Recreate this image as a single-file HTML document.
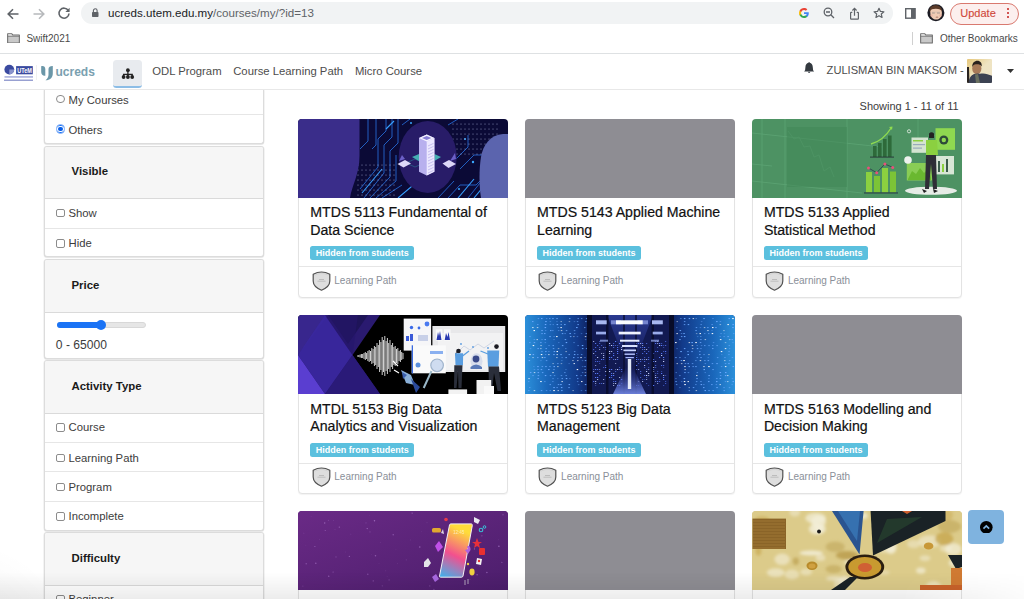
<!DOCTYPE html><html><head><meta charset="utf-8"><style>
*{box-sizing:border-box;margin:0;padding:0}
html,body{width:1024px;height:599px;overflow:hidden;background:#fff;font-family:"Liberation Sans",sans-serif;position:relative}
.a{position:absolute}
.t{position:absolute;white-space:nowrap;line-height:1}
#pill{left:81px;top:2.2px;width:812px;height:22.2px;border-radius:11.1px;background:#f1f3f4}
#bmline{left:0;top:53px;width:1024px;height:1px;background:#dee1e3}
#nav{left:0;top:54px;width:1024px;height:35.5px;background:#fff;border-bottom:1px solid #e8e8e8}
.scard{position:absolute;left:44px;width:219.5px;border:1px solid #dcdcdc;border-radius:3px;background:#fff;box-shadow:0 1px 1px rgba(0,0,0,.1),-.5px 0 0 #ececec,.5px 0 0 #ececec;overflow:hidden}
.shdr{position:absolute;left:0;right:0;top:0;background:#f6f6f6;border-bottom:1px solid #dadada}
.shdr b{position:absolute;left:26.5px;font-size:11.4px;color:#1a1a1a;font-weight:bold;white-space:nowrap;line-height:1}
.row{position:absolute;left:0;right:0;border-top:1px solid #e6e6e6}
.row span{position:absolute;left:23.5px;font-size:11.3px;color:#3c3c3c;white-space:nowrap;line-height:1}
.cb{position:absolute;left:11px;width:8.7px;height:8.7px;border:1px solid #8c8c8c;border-radius:2px;background:#fff}
.card{position:absolute;width:209.8px;height:179px;border:1px solid #e3e3e3;border-radius:4px;background:#fff;box-shadow:0 1px 1px rgba(0,0,0,.05)}
.img{position:absolute;left:-1px;top:-1px;width:209.8px;height:79.6px;overflow:hidden;border-radius:4px 4px 0 0}
.img svg{display:block}
.ttl{position:absolute;left:11px;top:84.2px;font-size:14.15px;line-height:17.6px;color:#111;white-space:nowrap;-webkit-text-stroke:.2px #111}
.badge{position:absolute;left:11px;top:126.6px;width:104px;height:14px;border-radius:2.5px;background:#5bc0de;color:#fff;font-weight:bold;font-size:9px;line-height:14px;padding-left:5.5px;white-space:nowrap}
.ftr{position:absolute;left:0;right:0;top:146.4px;bottom:0;border-top:1px solid #e6e6e6}
.ftr span{position:absolute;left:35px;top:8.3px;font-size:10px;color:#8a8f98;white-space:nowrap;line-height:1}
.shield{position:absolute;left:12.3px;top:2.7px;width:19px;height:21px}
</style></head><body>
<div class="a" id="pill"></div>
<svg class="a" style="left:6.3px;top:6.5px" width="14" height="14" viewBox="0 0 14 14"><path d="M12.5 7H2.2M7 2.2L2.2 7L7 11.8" fill="none" stroke="#5f6368" stroke-width="1.6"/></svg>
<svg class="a" style="left:31.5px;top:6.5px" width="14" height="14" viewBox="0 0 14 14"><path d="M1.5 7H11.8M7 2.2L11.8 7L7 11.8" fill="none" stroke="#b7b9bc" stroke-width="1.6"/></svg>
<svg class="a" style="left:57px;top:6px" width="14" height="14" viewBox="0 0 14 14"><path d="M11.3 4.6A5 5 0 1 0 12 7.5" fill="none" stroke="#5f6368" stroke-width="1.6"/><path d="M12.6 1.8V6H8.4Z" fill="#5f6368"/></svg>
<svg class="a" style="left:91px;top:7px" width="9" height="11" viewBox="91 7 9 11"><path d="M93.4 12.3V10.6A1.85 1.85 0 0 1 97.1 10.6V12.3" fill="none" stroke="#5f6368" stroke-width="1.1"/><rect x="92" y="12" width="6.5" height="5" rx=".7" fill="#5f6368"/></svg>
<div class="t" style="left:108px;top:6.9px;font-size:11.6px;color:#202124">ucreds.utem.edu.my<span style="color:#5f6368">/courses/my/?id=13</span></div>
<svg class="a" style="left:798.6px;top:8.4px" width="10" height="10" viewBox="0 0 24 24"><path d="M23.5 12.3c0-.8-.1-1.6-.2-2.3H12v4.5h6.5c-.3 1.5-1.1 2.7-2.4 3.6v3h3.9c2.2-2.1 3.5-5.1 3.5-8.8z" fill="#4285f4"/><path d="M12 24c3.2 0 6-1.1 7.9-2.9l-3.9-3c-1.1.7-2.4 1.2-4 1.2-3.1 0-5.7-2.1-6.6-4.9H1.4v3.1C3.4 21.4 7.4 24 12 24z" fill="#34a853"/><path d="M5.4 14.4c-.2-.7-.4-1.5-.4-2.4s.1-1.6.4-2.4V6.5H1.4C.5 8.2 0 10 0 12s.5 3.8 1.4 5.5l4-3.1z" fill="#fbbc05"/><path d="M12 4.8c1.8 0 3.3.6 4.6 1.8l3.4-3.4C18 1.2 15.2 0 12 0 7.4 0 3.4 2.6 1.4 6.5l4 3.1C6.3 6.9 8.9 4.8 12 4.8z" fill="#ea4335"/></svg>
<svg class="a" style="left:822.5px;top:7px" width="12" height="12" viewBox="0 0 12 12"><circle cx="5" cy="5" r="3.8" fill="none" stroke="#5f6368" stroke-width="1.3"/><path d="M3 5H7M7.8 7.8L11 11" stroke="#5f6368" stroke-width="1.3"/></svg>
<svg class="a" style="left:848.5px;top:6.5px" width="11" height="13" viewBox="0 0 11 13"><path d="M3.3 5.3H2.2Q1.6 5.3 1.6 5.9V11.6Q1.6 12.2 2.2 12.2H8.8Q9.4 12.2 9.4 11.6V5.9Q9.4 5.3 8.8 5.3H7.7" fill="none" stroke="#5f6368" stroke-width="1.2"/><path d="M5.5 8.8V1.6M3.4 3.5L5.5 1.4L7.6 3.5" fill="none" stroke="#5f6368" stroke-width="1.2"/></svg>
<svg class="a" style="left:872.5px;top:6.5px" width="12" height="12" viewBox="0 0 24 24"><path d="M12 2.5l2.9 6.3 6.9.7-5.2 4.6 1.5 6.8L12 17.4l-6.1 3.5 1.5-6.8-5.2-4.6 6.9-.7z" fill="none" stroke="#5f6368" stroke-width="2.4" stroke-linejoin="round"/></svg>
<svg class="a" style="left:905px;top:7.9px" width="10.8" height="10.9" viewBox="0 0 10.8 10.9"><rect x="0.7" y="0.7" width="9.4" height="9.5" fill="none" stroke="#5f6368" stroke-width="1.4"/><rect x="6" y="0.7" width="4.1" height="9.5" fill="#5f6368"/></svg>
<svg class="a" style="left:926px;top:3px" width="20" height="20" viewBox="926 3 20 20"><circle cx="935.9" cy="12.85" r="8.5" fill="#1c1c24"/><path d="M929.5 11C929.3 7.5 932 5.3 935.5 5.3 939 5.3 941.8 7.3 941.8 10.5L941 12 930.5 12.5Z" fill="#5a3a28"/><path d="M930.3 11.5C930.5 9.5 932.5 8.8 935.8 8.8 939.2 8.8 941.6 9.8 941.9 12 942.2 16 940 19.6 936.2 19.6 932.4 19.6 930 16.5 930.3 11.5Z" fill="#f0cbb4"/><circle cx="931.5" cy="15.5" r="1.3" fill="#eab0a0" opacity=".7"/><circle cx="940.5" cy="15.5" r="1.3" fill="#eab0a0" opacity=".7"/><path d="M932 13H934.8M937 13H940" stroke="#8a8078" stroke-width=".7"/><path d="M932 12.2H940.3" stroke="#b8b0a8" stroke-width=".4"/><ellipse cx="937" cy="17.2" rx="1.4" ry=".6" fill="#b08070"/></svg>
<div class="a" style="left:949.5px;top:2.5px;width:69.5px;height:22px;border-radius:11px;border:1px solid #d9796f;background:#fcefee"></div>
<div class="t" style="left:960.3px;top:8.3px;font-size:11px;color:#d0493c;-webkit-text-stroke:.15px #d0493c">Update</div>
<div class="a" style="left:1006.8px;top:7.8px;width:2.2px;height:2.2px;border-radius:50%;background:#c5221f;box-shadow:0 4px 0 #c5221f,0 8px 0 #c5221f"></div>
<svg class="a" style="left:7px;top:32.8px" width="13" height="10.6" viewBox="0 0 14 11.4"><path d="M.7 3.4H13.3V10.7H.7Z" fill="#c9c9c9"/><path d="M.7 .7H5L6.3 2.2H13.3V10.7H.7Z" fill="none" stroke="#6a6a6a" stroke-width="1.1" stroke-linejoin="round"/><path d="M.7 3.4H13.3" stroke="#6a6a6a" stroke-width="1"/></svg>
<div class="t" style="left:26.4px;top:34.1px;font-size:10px;color:#4a4a4a">Swift2021</div>
<div class="a" style="left:912px;top:32px;width:1px;height:12.5px;background:#d0d0d0"></div>
<svg class="a" style="left:920px;top:33px" width="13" height="10.6" viewBox="0 0 14 11.4"><path d="M.7 3.4H13.3V10.7H.7Z" fill="#c9c9c9"/><path d="M.7 .7H5L6.3 2.2H13.3V10.7H.7Z" fill="none" stroke="#6a6a6a" stroke-width="1.1" stroke-linejoin="round"/><path d="M.7 3.4H13.3" stroke="#6a6a6a" stroke-width="1"/></svg>
<div class="t" style="left:940px;top:34.2px;font-size:10px;color:#4a4a4a">Other Bookmarks</div>
<div id="bmline" class="a"></div>
<div id="nav" class="a"></div>
<svg class="a" style="left:0;top:55px" width="60" height="35" viewBox="0 55 60 35"><circle cx="9.3" cy="69.6" r="4.9" fill="#3a4aa0"/><path d="M9.3 69.6H14.2A4.9 4.9 0 0 1 9.3 74.5Z" fill="#8a94cc"/><rect x="16.1" y="66.1" width="16.7" height="8.2" fill="#3a4aa0"/><text x="17.2" y="73.4" font-family="Liberation Sans" font-weight="bold" font-size="8" fill="#fff" textLength="14.6" lengthAdjust="spacingAndGlyphs">UTeM</text><rect x="4.5" y="76" width="28.5" height="1.8" fill="#b3b9e0"/><rect x="4" y="79.6" width="29" height="1.2" fill="#7f89c6"/><rect x="36.4" y="65" width=".6" height="15" fill="#e6e6e6"/><path d="M41.2 66.3C43.5 65.6 45.3 66.8 45.3 69.2V75.8C43 76.2 41.2 74.5 41.2 72Z" fill="#6b97a8"/><path d="M52.8 65.9V73.5C52.8 77.8 50 80.2 45.5 80.3 47.8 78.5 48.5 76.8 48.5 74.5V69C48.5 67 50.3 65.8 52.8 65.9Z" fill="#6b97a8"/></svg>
<div class="t" style="left:55.5px;top:65.5px;font-size:12px;font-weight:bold;color:#7aa0b0">ucreds</div>
<div class="a" style="left:113.1px;top:60.3px;width:29px;height:27.5px;border-radius:3.5px;background:#e8ebef;border-bottom:2px solid #8cbde6"></div>
<svg class="a" style="left:110px;top:58px" width="36" height="34" viewBox="110 58 36 34"><circle cx="127.9" cy="70.2" r="1.9" fill="#222"/><path d="M127.9 71V74.5M123.6 77V74.3H132.2V77M127.9 74.3V77" fill="none" stroke="#222" stroke-width="1.3"/><circle cx="123.6" cy="77" r="1.9" fill="#222"/><circle cx="127.9" cy="77" r="1.9" fill="#222"/><circle cx="132.2" cy="77" r="1.9" fill="#222"/></svg>
<div class="t" style="left:152.3px;top:66px;font-size:11.3px;color:#4d4d4d">ODL Program</div>
<div class="t" style="left:233.2px;top:66px;font-size:11.3px;color:#4d4d4d">Course Learning Path</div>
<div class="t" style="left:354.9px;top:66px;font-size:11.3px;color:#4d4d4d">Micro Course</div>
<svg class="a" style="left:796px;top:56px" width="34" height="24" viewBox="796 56 34 24"><path d="M809.1 62C808.7 62 808.5 62.3 808.5 62.7 806.6 63.2 805.5 64.8 805.4 67.2L805.1 70.2 804.1 71.4H814.1L813.1 70.2 812.8 67.2C812.7 64.8 811.6 63.2 809.7 62.7 809.7 62.3 809.5 62 809.1 62Z" fill="#343a40"/><path d="M807.9 71.8H810.3A1.2 1.1 0 0 1 807.9 71.8Z" fill="#343a40"/></svg>
<div class="t" style="left:826.6px;top:64.9px;font-size:11.14px;color:#4d4d4d">ZULISMAN BIN MAKSOM -</div>
<svg class="a" style="left:967.2px;top:59px;border-radius:1px" width="25.3" height="24" viewBox="0 0 25.3 24"><defs><linearGradient id="pbg" x1="0" y1="0" x2="1" y2="1"><stop offset="0" stop-color="#e6c77a"/><stop offset=".5" stop-color="#efe4c2"/><stop offset="1" stop-color="#ece2c8"/></linearGradient></defs><rect width="25.3" height="24" fill="url(#pbg)"/><path d="M0 8L2 8 2.5 24H0Z" fill="#2a2420"/><ellipse cx="9.8" cy="9.5" rx="4.6" ry="5.8" fill="#a87a58"/><path d="M5.3 8C5 4 7.5 1.8 10.5 1.8 13.3 1.8 15 4 14.8 7.5 13.5 5.5 11 5 9 5.3 7 5.5 6 6.5 5.3 8Z" fill="#2a221e"/><path d="M1.5 24C2 19 4 16 7 15 9 14.5 11 14.3 13 14.8 17 13.8 21 15 25.3 17V24Z" fill="#3c4252"/><path d="M8 15.5L11 15 13 24H9Z" fill="#6a7060"/></svg>
<svg class="a" style="left:1006.5px;top:68.5px" width="7" height="4" viewBox="0 0 7 4"><path d="M0 0H7L3.5 4Z" fill="#333"/></svg>
<div class="scard" style="top:90px;height:54px;border-top:none;border-radius:0 0 3px 3px;overflow:visible"><div class="row" style="top:-5.5px;height:29.5px;border-top:none"><div class="a" style="left:10.8px;top:10.2px;width:8.8px;height:8.8px;border-radius:50%;border:1px solid #8a8a8a;background:#fff"></div><span style="top:10px">My Courses</span></div><div class="row" style="top:24px;height:29px"><div class="a" style="left:10.8px;top:9.3px;width:9.3px;height:9.3px;border-radius:50%;background:#1a73f5;border:1px solid #9cc0fa"></div><div class="a" style="left:13.2px;top:11.7px;width:4.5px;height:4.5px;border-radius:50%;background:#0a5fe8;box-shadow:0 0 0 1px #fff"></div><span style="top:9.5px">Others</span></div></div>
<div class="scard" style="top:145.6px;height:111.6px"><div class="shdr" style="height:52.7px"><b style="top:19.85px">Visible</b></div><div class="row" style="top:51.7px;height:29.3px;border-top:none"><div class="cb" style="top:10.5px"></div><span style="top:9.5px">Show</span></div><div class="row" style="top:81.0px;height:29.3px;"><div class="cb" style="top:10.5px"></div><span style="top:9.5px">Hide</span></div></div>
<div class="scard" style="top:259px;height:100px"><div class="shdr" style="height:52.7px"><b style="top:19.85px">Price</b></div><div class="a" style="left:11.5px;top:62px;width:89px;height:6px;border-radius:3px;background:#e6e6e6;border:1px solid #d8d8d8"></div><div class="a" style="left:11.5px;top:62px;width:46px;height:6px;border-radius:3px;background:#1a73f5"></div><div class="a" style="left:50.8px;top:59.8px;width:10.5px;height:10.5px;border-radius:50%;background:#1a73f5"></div><span class="t" style="left:10.8px;top:78.6px;font-size:12.1px;color:#3c3c3c">0 - 65000</span></div>
<div class="scard" style="top:360px;height:170.5px"><div class="shdr" style="height:52.7px"><b style="top:19.85px">Activity Type</b></div><div class="row" style="top:51.7px;height:29.3px;border-top:none"><div class="cb" style="top:10.5px"></div><span style="top:9.5px">Course</span></div><div class="row" style="top:81.0px;height:29.3px;"><div class="cb" style="top:10.5px"></div><span style="top:9.5px">Learning Path</span></div><div class="row" style="top:110.30000000000001px;height:29.3px;"><div class="cb" style="top:10.5px"></div><span style="top:9.5px">Program</span></div><div class="row" style="top:139.60000000000002px;height:29.3px;"><div class="cb" style="top:10.5px"></div><span style="top:9.5px">Incomplete</span></div></div>
<div class="scard" style="top:532px;height:120px"><div class="shdr" style="height:52.7px"><b style="top:19.85px">Difficulty</b></div><div class="row" style="top:51.7px;height:29.3px;border-top:none"><div class="cb" style="top:10.5px"></div><span style="top:9.5px">Beginner</span></div><div class="row" style="top:81.0px;height:29.3px;"><div class="cb" style="top:10.5px"></div><span style="top:9.5px">Intermediate</span></div></div>
<div class="t" style="left:859.6px;top:101.2px;font-size:10.97px;color:#3c3c3c">Showing 1 - 11 of 11</div>
<div class="card" style="left:298.3px;top:118.9px"><div class="img"><svg width="210" height="79" viewBox="0 0 210 79"><rect width="210" height="79" fill="#0b0a36"/>
<g stroke="#2468d0" stroke-width="0.9" fill="none">
<path d="M62 70L80 48V20L88 12V0"/><path d="M66 79L86 54V26L94 18V0"/><path d="M72 79L92 58V32L100 24V0"/>
<path d="M78 79L98 62V36"/><path d="M84 79L104 66"/><path d="M62 30L70 22V0"/><path d="M74 30L78 26V0"/>
<path d="M150 79L162 66H178L190 54"/><path d="M162 50L176 36H186"/><path d="M170 79L182 64"/>
<path d="M104 6L112 0"/><path d="M150 6L160 0"/><path d="M140 79L156 62"/><path d="M158 40L170 28V16"/>
</g>
<g stroke="#38a0ff" stroke-width="1.1" fill="none"><path d="M100 79L120 62H130"/><path d="M160 79L176 60"/><path d="M64 74L84 50"/><path d="M176 79L190 62"/><path d="M88 10L96 2"/></g>
<g fill="#3aa8ff"><circle cx="113" cy="4" r="1"/><circle cx="167" cy="20" r="1"/><circle cx="175" cy="43" r="1.2"/><circle cx="161" cy="70" r="1"/></g>
<g fill="#c0c6ee" opacity=".75"><circle cx="155" cy="5" r="0.55"/><circle cx="155" cy="10" r="0.55"/><circle cx="155" cy="15" r="0.55"/><circle cx="155" cy="20" r="0.55"/><circle cx="155" cy="25" r="0.55"/><circle cx="155" cy="30" r="0.55"/><circle cx="155" cy="35" r="0.55"/><circle cx="159" cy="5" r="0.55"/><circle cx="159" cy="10" r="0.55"/><circle cx="159" cy="15" r="0.55"/><circle cx="159" cy="20" r="0.55"/><circle cx="159" cy="25" r="0.55"/><circle cx="159" cy="30" r="0.55"/><circle cx="159" cy="35" r="0.55"/><circle cx="163" cy="5" r="0.55"/><circle cx="163" cy="10" r="0.55"/><circle cx="163" cy="15" r="0.55"/><circle cx="163" cy="20" r="0.55"/><circle cx="163" cy="25" r="0.55"/><circle cx="163" cy="30" r="0.55"/><circle cx="163" cy="35" r="0.55"/><circle cx="167" cy="5" r="0.55"/><circle cx="167" cy="10" r="0.55"/><circle cx="167" cy="15" r="0.55"/><circle cx="167" cy="20" r="0.55"/><circle cx="167" cy="25" r="0.55"/><circle cx="167" cy="30" r="0.55"/><circle cx="167" cy="35" r="0.55"/><circle cx="171" cy="5" r="0.55"/><circle cx="171" cy="10" r="0.55"/><circle cx="171" cy="15" r="0.55"/><circle cx="171" cy="20" r="0.55"/><circle cx="171" cy="25" r="0.55"/><circle cx="171" cy="30" r="0.55"/><circle cx="171" cy="35" r="0.55"/><circle cx="175" cy="5" r="0.55"/><circle cx="175" cy="10" r="0.55"/><circle cx="175" cy="15" r="0.55"/><circle cx="175" cy="20" r="0.55"/><circle cx="175" cy="25" r="0.55"/><circle cx="175" cy="30" r="0.55"/><circle cx="175" cy="35" r="0.55"/><circle cx="179" cy="5" r="0.55"/><circle cx="179" cy="10" r="0.55"/><circle cx="179" cy="15" r="0.55"/><circle cx="179" cy="20" r="0.55"/><circle cx="179" cy="25" r="0.55"/><circle cx="179" cy="30" r="0.55"/><circle cx="179" cy="35" r="0.55"/><circle cx="183" cy="5" r="0.55"/><circle cx="183" cy="10" r="0.55"/><circle cx="183" cy="15" r="0.55"/><circle cx="183" cy="20" r="0.55"/><circle cx="183" cy="25" r="0.55"/><circle cx="183" cy="30" r="0.55"/><circle cx="183" cy="35" r="0.55"/><circle cx="187" cy="5" r="0.55"/><circle cx="187" cy="10" r="0.55"/><circle cx="187" cy="15" r="0.55"/><circle cx="187" cy="20" r="0.55"/><circle cx="187" cy="25" r="0.55"/><circle cx="187" cy="30" r="0.55"/><circle cx="187" cy="35" r="0.55"/><circle cx="191" cy="5" r="0.55"/><circle cx="191" cy="10" r="0.55"/><circle cx="191" cy="15" r="0.55"/><circle cx="191" cy="20" r="0.55"/><circle cx="191" cy="25" r="0.55"/><circle cx="191" cy="30" r="0.55"/><circle cx="191" cy="35" r="0.55"/><circle cx="195" cy="5" r="0.55"/><circle cx="195" cy="10" r="0.55"/><circle cx="195" cy="15" r="0.55"/><circle cx="195" cy="20" r="0.55"/><circle cx="195" cy="25" r="0.55"/><circle cx="195" cy="30" r="0.55"/><circle cx="195" cy="35" r="0.55"/><circle cx="199" cy="5" r="0.55"/><circle cx="199" cy="10" r="0.55"/><circle cx="199" cy="15" r="0.55"/><circle cx="199" cy="20" r="0.55"/><circle cx="199" cy="25" r="0.55"/><circle cx="199" cy="30" r="0.55"/><circle cx="199" cy="35" r="0.55"/><circle cx="60" cy="46" r="0.55"/><circle cx="60" cy="51" r="0.55"/><circle cx="60" cy="56" r="0.55"/><circle cx="60" cy="61" r="0.55"/><circle cx="60" cy="66" r="0.55"/><circle cx="60" cy="71" r="0.55"/><circle cx="60" cy="76" r="0.55"/><circle cx="64" cy="46" r="0.55"/><circle cx="64" cy="51" r="0.55"/><circle cx="64" cy="56" r="0.55"/><circle cx="64" cy="61" r="0.55"/><circle cx="64" cy="66" r="0.55"/><circle cx="64" cy="71" r="0.55"/><circle cx="64" cy="76" r="0.55"/><circle cx="68" cy="46" r="0.55"/><circle cx="68" cy="51" r="0.55"/><circle cx="68" cy="56" r="0.55"/><circle cx="68" cy="61" r="0.55"/><circle cx="68" cy="66" r="0.55"/><circle cx="68" cy="71" r="0.55"/><circle cx="68" cy="76" r="0.55"/><circle cx="72" cy="46" r="0.55"/><circle cx="72" cy="51" r="0.55"/><circle cx="72" cy="56" r="0.55"/><circle cx="72" cy="61" r="0.55"/><circle cx="72" cy="66" r="0.55"/><circle cx="72" cy="71" r="0.55"/><circle cx="72" cy="76" r="0.55"/><circle cx="76" cy="46" r="0.55"/><circle cx="76" cy="51" r="0.55"/><circle cx="76" cy="56" r="0.55"/><circle cx="76" cy="61" r="0.55"/><circle cx="76" cy="66" r="0.55"/><circle cx="76" cy="71" r="0.55"/><circle cx="76" cy="76" r="0.55"/><circle cx="80" cy="46" r="0.55"/><circle cx="80" cy="51" r="0.55"/><circle cx="80" cy="56" r="0.55"/><circle cx="80" cy="61" r="0.55"/><circle cx="80" cy="66" r="0.55"/><circle cx="80" cy="71" r="0.55"/><circle cx="80" cy="76" r="0.55"/><circle cx="84" cy="46" r="0.55"/><circle cx="84" cy="51" r="0.55"/><circle cx="84" cy="56" r="0.55"/><circle cx="84" cy="61" r="0.55"/><circle cx="84" cy="66" r="0.55"/><circle cx="84" cy="71" r="0.55"/><circle cx="84" cy="76" r="0.55"/><circle cx="88" cy="46" r="0.55"/><circle cx="88" cy="51" r="0.55"/><circle cx="88" cy="56" r="0.55"/><circle cx="88" cy="61" r="0.55"/><circle cx="88" cy="66" r="0.55"/><circle cx="88" cy="71" r="0.55"/><circle cx="88" cy="76" r="0.55"/><circle cx="92" cy="46" r="0.55"/><circle cx="92" cy="51" r="0.55"/><circle cx="92" cy="56" r="0.55"/><circle cx="92" cy="61" r="0.55"/><circle cx="92" cy="66" r="0.55"/><circle cx="92" cy="71" r="0.55"/><circle cx="92" cy="76" r="0.55"/><circle cx="96" cy="46" r="0.55"/><circle cx="96" cy="51" r="0.55"/><circle cx="96" cy="56" r="0.55"/><circle cx="96" cy="61" r="0.55"/><circle cx="96" cy="66" r="0.55"/><circle cx="96" cy="71" r="0.55"/><circle cx="96" cy="76" r="0.55"/></g>
<path d="M0 0H61.5V37C61.5 55 54 66 52 79H0Z" fill="#3a2d8a"/>
<ellipse cx="129.7" cy="38" rx="29" ry="36" fill="#281c68"/>
<path d="M210 79H183C181 66 181 50 183 38 185 26 192 16 205 15H210Z" fill="#5b64ae"/>
<path d="M108 44L117 48 126 44 117 40Z" fill="none" stroke="#2a8a9a" stroke-width=".5"/>
<path d="M99.5 45L107 41 113 44.5 105.5 48.5Z" fill="#ddd8f8"/><path d="M101 42L104 36 107 40Z" fill="#6c60c8"/>
<path d="M144.5 44.5L151 41 158 45 150.5 49Z" fill="#ddd8f8"/><path d="M152 42L157 34 158 40Z" fill="#6c60c8"/>
<path d="M114 38L121 35 121 42Z" fill="#4ac8c0" opacity=".85"/><path d="M136.4 35L143 38 136.4 42Z" fill="#4ac8c0" opacity=".85"/>
<path d="M121 19L128.7 15.4 136.4 19V52.7L128.7 56.4 121 52.7Z" fill="#b8b0ee"/>
<path d="M128.7 22.6V56.4L136.4 52.7V19Z" fill="#ece8ff"/>
<path d="M121 19L128.7 15.4 136.4 19 128.7 22.6Z" fill="#f4f2ff"/><path d="M124 19L128.7 17 133.4 19 128.7 21Z" fill="#8a80d8"/>
<g stroke="#9c92dc" stroke-width=".5"><path d="M130 27L135.5 24.4"/><path d="M130 30L135.5 27.4"/><path d="M130 33L135.5 30.4"/><path d="M130 36L135.5 33.4"/><path d="M130 39L135.5 36.4"/><path d="M130 42L135.5 39.4"/><path d="M130 45L135.5 42.4"/><path d="M130 48L135.5 45.4"/><path d="M130 51L135.5 48.4"/><path d="M130 54L135.5 51.4"/></g>
</svg></div><div class="ttl">MTDS 5113 Fundamental of<br>Data Science</div><div class="badge">Hidden from students</div><div class="ftr"><svg class="shield" viewBox="0 0 19 21"><path d="M1.2 4.3Q9.5 -0.3 17.8 4.3V11Q17.8 16.8 9.5 20.2 1.2 16.8 1.2 11Z" fill="#dedede" stroke="#505050" stroke-width="1.2" stroke-linejoin="round"/><path d="M2.8 5.3Q9.5 1.8 16.2 5.3" fill="none" stroke="#aaa" stroke-width=".4" stroke-dasharray=".6 .6"/><path d="M7 9.5H12M5.5 11.2H13.5" stroke="#9a9a9a" stroke-width=".5"/></svg><span>Learning Path</span></div></div>
<div class="card" style="left:525.1px;top:118.9px"><div class="img"><svg width="210" height="79" viewBox="0 0 210 79"><rect width="210" height="79" fill="#8e8d93"/></svg></div><div class="ttl">MTDS 5143 Applied Machine<br>Learning</div><div class="badge">Hidden from students</div><div class="ftr"><svg class="shield" viewBox="0 0 19 21"><path d="M1.2 4.3Q9.5 -0.3 17.8 4.3V11Q17.8 16.8 9.5 20.2 1.2 16.8 1.2 11Z" fill="#dedede" stroke="#505050" stroke-width="1.2" stroke-linejoin="round"/><path d="M2.8 5.3Q9.5 1.8 16.2 5.3" fill="none" stroke="#aaa" stroke-width=".4" stroke-dasharray=".6 .6"/><path d="M7 9.5H12M5.5 11.2H13.5" stroke="#9a9a9a" stroke-width=".5"/></svg><span>Learning Path</span></div></div>
<div class="card" style="left:751.9px;top:118.9px"><div class="img"><svg width="210" height="79" viewBox="0 0 210 79"><rect width="210" height="79" fill="#4d9263"/>
<g stroke="#5fa676" stroke-width="0.9" fill="none" opacity=".8">
<path d="M10 0V79M33 0V79M95 0V79M166 0V20"/><path d="M0 14L130 28M0 62L110 74M0 45L20 47"/>
<path d="M36 12L42 20L47 18L52 28L58 27L62 38L67 36L72 52L78 48L82 58"/>
</g>
<g fill="#3f8656" opacity=".5"><rect x="35" y="8" width="60" height="60"/></g>
<rect x="121" y="27" width="3.6" height="11" fill="#2e6a3a"/><rect x="126" y="24" width="3.6" height="14" fill="#2e6a3a"/><rect x="131" y="20" width="3.6" height="18" fill="#2e6a3a"/><rect x="136" y="16.5" width="3.6" height="21.5" fill="#2e6a3a"/>
<path d="M119 25Q131 22 139.5 8.5" stroke="#8fdc50" stroke-width="1.4" fill="none"/><path d="M137 8L140.5 7.5 140 11Z" fill="#8fdc50"/>
<rect x="118" y="37.6" width="24" height="1" fill="#2a3a3a"/>
<rect x="114" y="53" width="6" height="20.5" fill="#8bd040"/><rect x="122" y="57" width="6" height="16.5" fill="#7cc436"/><rect x="130" y="49" width="6" height="24.5" fill="#8bd040"/><rect x="138" y="52.5" width="6" height="21" fill="#7cc436"/>
<path d="M116.5 49L124.7 53.7L132.9 45L140.7 48.4" stroke="#2a3a4a" stroke-width=".8" fill="none"/>
<circle cx="116.5" cy="49" r="1.5" fill="#e8507a"/><circle cx="124.7" cy="53.7" r="1.5" fill="#e8507a"/><circle cx="132.9" cy="45" r="1.5" fill="#e8507a"/><circle cx="140.7" cy="48.4" r="1.5" fill="#e8507a"/>
<rect x="112" y="73.4" width="34" height="1.1" fill="#2a3a4a"/>
<ellipse cx="179" cy="71.8" rx="26" ry="4" fill="#e6ece6"/>
<rect x="159.5" y="18.5" width="16.5" height="15.3" fill="#d4e4d0"/><rect x="161" y="21" width="10" height="1.5" fill="#8bd040"/><rect x="161" y="25" width="12" height="1.2" fill="#9ab"/><rect x="161" y="28.5" width="9" height="1.2" fill="#9ab"/>
<rect x="183.5" y="9.2" width="19.5" height="21.6" fill="#8fd850"/><circle cx="191.8" cy="21" r="4.5" fill="#2e4a3a"/><circle cx="191.8" cy="21" r="2.2" fill="#8fd850"/>
<rect x="183.5" y="37" width="18.5" height="18.4" fill="#d8e6d6"/><rect x="186" y="42" width="2" height="11" fill="#3a5a4a"/><rect x="190" y="45" width="2" height="8" fill="#8bd040"/><rect x="194" y="40" width="2" height="13" fill="#3a5a4a"/>
<rect x="154.8" y="44" width="25.7" height="17.5" fill="#9ee050" opacity=".75"/><path d="M156 60L160 52L164 55L168 49L172 54L176 50L179 58V61H156Z" fill="#6ab830"/>
<circle cx="156" cy="41" r="3.8" fill="#eef2ee"/>
<path d="M174 36H184L185 70H181L179 45L177 70H173Z" fill="#2e2e36"/><path d="M174 21H185L186 36H174Z" fill="#8bd040"/>
<circle cx="179.5" cy="16.5" r="2.6" fill="#f0c8a8"/><path d="M177 14.5Q179.5 12 182 14.5V19H177Z" fill="#222"/>
<path d="M170 70L175 72 172 74ZM181 70L186 72 182 74Z" fill="#222"/>
<circle cx="157" cy="12.3" r="1.6" fill="none" stroke="#e8f0e8" stroke-width=".8"/>
</svg></div><div class="ttl">MTDS 5133 Applied<br>Statistical Method</div><div class="badge">Hidden from students</div><div class="ftr"><svg class="shield" viewBox="0 0 19 21"><path d="M1.2 4.3Q9.5 -0.3 17.8 4.3V11Q17.8 16.8 9.5 20.2 1.2 16.8 1.2 11Z" fill="#dedede" stroke="#505050" stroke-width="1.2" stroke-linejoin="round"/><path d="M2.8 5.3Q9.5 1.8 16.2 5.3" fill="none" stroke="#aaa" stroke-width=".4" stroke-dasharray=".6 .6"/><path d="M7 9.5H12M5.5 11.2H13.5" stroke="#9a9a9a" stroke-width=".5"/></svg><span>Learning Path</span></div></div>
<div class="card" style="left:298.3px;top:315.4px"><div class="img"><svg width="210" height="79" viewBox="0 0 210 79"><rect width="210" height="79" fill="#000000"/>
<path d="M0 0H82L54.5 40 82 79H0Z" fill="#2a1a70"/>
<path d="M0 0H30L0 40Z" fill="#3a2890" opacity=".9"/><path d="M30 0H70L50 29 30 0Z" fill="#1e1458"/>
<path d="M0 40L27 79H0Z" fill="#5a3ed0"/><path d="M0 40L27 79 54.5 40 27 0Z" fill="#3a28a0" opacity=".9"/>
<path d="M27 79L54.5 40 82 79Z" fill="#2a1a78"/><path d="M27 0H60L54.5 40 27 0Z" fill="#24166a" opacity=".6"/>
<g stroke="#e8e8e8" stroke-width=".9"><line x1="59.50" y1="40.5" x2="59.50" y2="41.5"/><line x1="60.80" y1="40.0" x2="60.80" y2="42.0"/><line x1="62.10" y1="39.5" x2="62.10" y2="42.5"/><line x1="63.40" y1="39.0" x2="63.40" y2="43.0"/><line x1="64.70" y1="39.0" x2="64.70" y2="43.0"/><line x1="66.00" y1="38.0" x2="66.00" y2="44.0"/><line x1="67.30" y1="37.0" x2="67.30" y2="45.0"/><line x1="68.60" y1="38.0" x2="68.60" y2="44.0"/><line x1="69.90" y1="36.0" x2="69.90" y2="46.0"/><line x1="71.20" y1="35.0" x2="71.20" y2="47.0"/><line x1="72.50" y1="36.0" x2="72.50" y2="46.0"/><line x1="73.80" y1="33.0" x2="73.80" y2="49.0"/><line x1="75.10" y1="34.0" x2="75.10" y2="48.0"/><line x1="76.40" y1="31.0" x2="76.40" y2="51.0"/><line x1="77.70" y1="32.0" x2="77.70" y2="50.0"/><line x1="79.00" y1="28.0" x2="79.00" y2="54.0"/><line x1="80.30" y1="30.0" x2="80.30" y2="52.0"/><line x1="81.60" y1="25.0" x2="81.60" y2="57.0"/><line x1="82.90" y1="27.0" x2="82.90" y2="55.0"/><line x1="84.20" y1="22.0" x2="84.20" y2="60.0"/><line x1="85.50" y1="25.0" x2="85.50" y2="57.0"/><line x1="86.80" y1="21.0" x2="86.80" y2="61.0"/><line x1="88.10" y1="26.0" x2="88.10" y2="56.0"/><line x1="89.40" y1="23.0" x2="89.40" y2="59.0"/><line x1="90.70" y1="28.0" x2="90.70" y2="54.0"/><line x1="92.00" y1="25.0" x2="92.00" y2="57.0"/><line x1="93.30" y1="30.0" x2="93.30" y2="52.0"/><line x1="94.60" y1="28.0" x2="94.60" y2="54.0"/><line x1="95.90" y1="32.0" x2="95.90" y2="50.0"/><line x1="97.20" y1="31.0" x2="97.20" y2="51.0"/><line x1="98.50" y1="34.0" x2="98.50" y2="48.0"/><line x1="99.80" y1="33.0" x2="99.80" y2="49.0"/><line x1="101.10" y1="36.0" x2="101.10" y2="46.0"/><line x1="102.40" y1="35.0" x2="102.40" y2="47.0"/><line x1="103.70" y1="37.0" x2="103.70" y2="45.0"/><line x1="105.00" y1="38.0" x2="105.00" y2="44.0"/></g>
<rect x="134.4" y="11" width="72.8" height="46" fill="#e8e8ea"/><rect x="140" y="18" width="65" height="37" fill="#f2f2f3"/>
<rect x="137.8" y="14.3" width="6.5" height="11.3" fill="#fafafa"/><rect x="146" y="14.3" width="6.5" height="11.3" fill="#fafafa"/>
<path d="M138.5 25L140 17 141 21 142 16 143.5 25Z" fill="#2a3ab0"/><path d="M146.7 25L148 18 149.5 22 150.5 17 152 25Z" fill="#2a3ab0"/>
<path d="M160 37L166 31 172 35 180 29 186 33 196 26" stroke="#c8cfe0" stroke-width=".8" fill="none"/>
<circle cx="163" cy="29" r=".9" fill="#5a9ae0"/><circle cx="175" cy="32" r=".9" fill="#5a9ae0"/><circle cx="190" cy="33" r=".9" fill="#5a9ae0"/>
<rect x="105.7" y="3.6" width="27.4" height="32" fill="#f6f6f8"/><circle cx="113.5" cy="12.5" r="1.7" fill="#3a6ae8"/><circle cx="121" cy="13" r="1.4" fill="#3a6ae8"/><circle cx="129" cy="9" r="2.4" fill="#4a7af0"/>
<rect x="108" y="21" width="3" height="5" fill="#3a5ad8"/><rect x="112" y="19" width="3" height="7" fill="#3a5ad8"/><rect x="120" y="20" width="10" height="6" fill="#c8d0e8"/>
<rect x="113.7" y="30.3" width="34.1" height="28" fill="#fafafa"/><rect x="113.7" y="30.3" width="1.3" height="28" fill="#3a6ae0"/><rect x="132" y="36" width="13" height="3" fill="#8ab0f0"/><circle cx="120" cy="50" r="2.5" fill="#5a90e0"/>
<circle cx="139.1" cy="50.3" r="6.3" fill="#cfdcf0" stroke="#a0b4cc" stroke-width="1.2"/><path d="M133.5 56L125.7 73" stroke="#9ab8c8" stroke-width="2"/>
<path d="M103 55L113 60 117 70 108 68Z" fill="#8ab0d8"/><path d="M104 57L109 60 105 64Z" fill="#3a60b0"/><path d="M113 64L122 72 118 78Z" fill="#2a4a9a"/>
<path d="M95 46L100 51M96 55L101 58" stroke="#fff" stroke-width="1.2"/>
<circle cx="160.5" cy="36" r="2.3" fill="#1a1a22"/><path d="M158.5 36V41L157 40Z" fill="#1a1a22"/>
<path d="M157 38.3H165.1L165 50.3H157.5Z" fill="#5a9ee0"/><path d="M164.5 41L171 36" stroke="#5a9ee0" stroke-width="1.3"/>
<path d="M156.3 50.3H164.5L163.5 73H160.5L160 56 158.5 73H156Z" fill="#2a2e3a"/>
<circle cx="198.5" cy="31.6" r="2.3" fill="#1a1a22"/>
<path d="M189.2 35.6H201.2L200.5 51.7H190Z" fill="#5a9ee0"/><path d="M190 39L182.5 36" stroke="#5a9ee0" stroke-width="1.3"/>
<path d="M190.5 51.5H201L203 76H199.5L196 58 194 76H191Z" fill="#2a2e3a"/>
<ellipse cx="178.5" cy="46.3" rx="6" ry="8" fill="#d8deec"/><circle cx="178" cy="44" r="3.4" fill="#3a4a8a"/><path d="M172.5 52Q178 47 184 52V54H172.5Z" fill="#5a7ab8"/>
<rect x="150.4" y="74.4" width="18.7" height="5" fill="#f2f2f2"/><rect x="178.5" y="65" width="14.7" height="14" fill="#f2f2f2"/><rect x="186" y="71" width="10" height="8" fill="#fafafa"/>
</svg></div><div class="ttl">MTDL 5153 Big Data<br>Analytics and Visualization</div><div class="badge">Hidden from students</div><div class="ftr"><svg class="shield" viewBox="0 0 19 21"><path d="M1.2 4.3Q9.5 -0.3 17.8 4.3V11Q17.8 16.8 9.5 20.2 1.2 16.8 1.2 11Z" fill="#dedede" stroke="#505050" stroke-width="1.2" stroke-linejoin="round"/><path d="M2.8 5.3Q9.5 1.8 16.2 5.3" fill="none" stroke="#aaa" stroke-width=".4" stroke-dasharray=".6 .6"/><path d="M7 9.5H12M5.5 11.2H13.5" stroke="#9a9a9a" stroke-width=".5"/></svg><span>Learning Path</span></div></div>
<div class="card" style="left:525.1px;top:315.4px"><div class="img"><svg width="210" height="79" viewBox="0 0 210 79"><rect width="210" height="79" fill="#0e2f7a"/>
<defs><linearGradient id="gs" x1="0" x2="1"><stop offset="0" stop-color="#2c90da"/><stop offset=".1" stop-color="#1a68bc"/><stop offset=".25" stop-color="#123a8a"/><stop offset=".32" stop-color="#0e1c56"/><stop offset=".68" stop-color="#0e1c56"/><stop offset=".75" stop-color="#123a8a"/><stop offset=".9" stop-color="#1a68bc"/><stop offset="1" stop-color="#2c90da"/></linearGradient>
<linearGradient id="gfl" x1="0" y1="0" x2="0" y2="1"><stop offset="0" stop-color="#3a4ab0" stop-opacity="0"/><stop offset="1" stop-color="#7a90f0" stop-opacity=".85"/></linearGradient>
<linearGradient id="gcl" x1="0" y1="0" x2="0" y2="1"><stop offset="0" stop-color="#2a3a90"/><stop offset=".6" stop-color="#1a2468"/><stop offset="1" stop-color="#141c50"/></linearGradient></defs>
<rect width="210" height="79" fill="url(#gs)"/>
<rect x="4.3" y="21" width="1.5" height="1.1" fill="#6aa8ff" opacity="0.65"/><rect x="4.1" y="27" width="1.5" height="1.1" fill="#6aa8ff" opacity="0.65"/><rect x="4.8" y="33" width="1.5" height="1.1" fill="#6aa8ff" opacity="0.49"/><rect x="4.2" y="39" width="1.5" height="1.1" fill="#ffffff" opacity="0.87"/><rect x="3.4" y="42" width="1.5" height="1.1" fill="#6aa8ff" opacity="0.35"/><rect x="3.6" y="45" width="1.5" height="1.1" fill="#6aa8ff" opacity="0.99"/><rect x="4.9" y="57" width="1.5" height="1.1" fill="#6aa8ff" opacity="0.96"/><rect x="3.3" y="63" width="1.5" height="1.1" fill="#ffffff" opacity="0.58"/><rect x="3.0" y="66" width="1.5" height="1.1" fill="#6aa8ff" opacity="0.55"/><rect x="4.0" y="72" width="1.5" height="1.1" fill="#6aa8ff" opacity="0.55"/><rect x="3.1" y="75" width="1.5" height="1.1" fill="#6aa8ff" opacity="0.66"/><rect x="7.0" y="6" width="1.5" height="1.1" fill="#6aa8ff" opacity="0.84"/><rect x="7.1" y="12" width="1.5" height="1.1" fill="#ffffff" opacity="0.73"/><rect x="8.5" y="15" width="1.5" height="1.1" fill="#ffffff" opacity="0.97"/><rect x="8.6" y="24" width="1.5" height="1.1" fill="#6aa8ff" opacity="0.58"/><rect x="8.7" y="27" width="1.5" height="1.1" fill="#6aa8ff" opacity="0.84"/><rect x="7.7" y="30" width="1.5" height="1.1" fill="#ffffff" opacity="0.96"/><rect x="7.6" y="39" width="1.5" height="1.1" fill="#6aa8ff" opacity="0.95"/><rect x="7.3" y="42" width="1.5" height="1.1" fill="#ffffff" opacity="0.47"/><rect x="8.1" y="51" width="1.5" height="1.1" fill="#6aa8ff" opacity="0.38"/><rect x="8.7" y="54" width="1.5" height="1.1" fill="#6aa8ff" opacity="0.50"/><rect x="8.8" y="57" width="1.5" height="1.1" fill="#ffffff" opacity="0.62"/><rect x="7.3" y="60" width="1.5" height="1.1" fill="#6aa8ff" opacity="0.67"/><rect x="8.7" y="75" width="1.5" height="1.1" fill="#ffffff" opacity="0.63"/><rect x="12.7" y="3" width="1.5" height="1.1" fill="#6aa8ff" opacity="0.64"/><rect x="12.0" y="9" width="1.5" height="1.1" fill="#6aa8ff" opacity="0.67"/><rect x="11.8" y="12" width="1.5" height="1.1" fill="#ffffff" opacity="0.61"/><rect x="11.5" y="24" width="1.5" height="1.1" fill="#ffffff" opacity="0.57"/><rect x="12.4" y="33" width="1.5" height="1.1" fill="#6aa8ff" opacity="0.86"/><rect x="12.0" y="42" width="1.5" height="1.1" fill="#6aa8ff" opacity="0.81"/><rect x="12.2" y="51" width="1.5" height="1.1" fill="#6aa8ff" opacity="0.96"/><rect x="12.3" y="54" width="1.5" height="1.1" fill="#6aa8ff" opacity="0.71"/><rect x="12.6" y="57" width="1.5" height="1.1" fill="#6aa8ff" opacity="0.88"/><rect x="12.7" y="60" width="1.5" height="1.1" fill="#6aa8ff" opacity="0.77"/><rect x="12.4" y="63" width="1.5" height="1.1" fill="#6aa8ff" opacity="0.90"/><rect x="16.0" y="3" width="1.5" height="1.1" fill="#6aa8ff" opacity="0.89"/><rect x="16.3" y="15" width="1.5" height="1.1" fill="#6aa8ff" opacity="0.86"/><rect x="16.3" y="18" width="1.5" height="1.1" fill="#6aa8ff" opacity="0.76"/><rect x="16.3" y="24" width="1.5" height="1.1" fill="#6aa8ff" opacity="0.45"/><rect x="15.1" y="27" width="1.5" height="1.1" fill="#6aa8ff" opacity="0.80"/><rect x="15.3" y="30" width="1.5" height="1.1" fill="#ffffff" opacity="0.50"/><rect x="15.1" y="33" width="1.5" height="1.1" fill="#ffffff" opacity="0.47"/><rect x="16.2" y="36" width="1.5" height="1.1" fill="#6aa8ff" opacity="0.60"/><rect x="15.8" y="39" width="1.5" height="1.1" fill="#ffffff" opacity="0.94"/><rect x="16.7" y="42" width="1.5" height="1.1" fill="#ffffff" opacity="0.62"/><rect x="15.2" y="45" width="1.5" height="1.1" fill="#6aa8ff" opacity="0.37"/><rect x="16.6" y="51" width="1.5" height="1.1" fill="#6aa8ff" opacity="0.73"/><rect x="15.7" y="54" width="1.5" height="1.1" fill="#6aa8ff" opacity="0.88"/><rect x="16.9" y="57" width="1.5" height="1.1" fill="#6aa8ff" opacity="0.74"/><rect x="15.2" y="66" width="1.5" height="1.1" fill="#ffffff" opacity="0.93"/><rect x="15.8" y="75" width="1.5" height="1.1" fill="#6aa8ff" opacity="0.76"/><rect x="20.9" y="3" width="1.5" height="1.1" fill="#6aa8ff" opacity="0.50"/><rect x="20.2" y="6" width="1.5" height="1.1" fill="#6aa8ff" opacity="0.97"/><rect x="19.8" y="9" width="1.5" height="1.1" fill="#6aa8ff" opacity="0.99"/><rect x="19.6" y="12" width="1.5" height="1.1" fill="#6aa8ff" opacity="0.99"/><rect x="19.9" y="15" width="1.5" height="1.1" fill="#6aa8ff" opacity="0.43"/><rect x="19.0" y="18" width="1.5" height="1.1" fill="#6aa8ff" opacity="0.86"/><rect x="19.5" y="24" width="1.5" height="1.1" fill="#6aa8ff" opacity="0.96"/><rect x="19.6" y="27" width="1.5" height="1.1" fill="#6aa8ff" opacity="0.45"/><rect x="20.5" y="33" width="1.5" height="1.1" fill="#6aa8ff" opacity="0.77"/><rect x="20.1" y="36" width="1.5" height="1.1" fill="#6aa8ff" opacity="0.84"/><rect x="19.9" y="39" width="1.5" height="1.1" fill="#6aa8ff" opacity="0.54"/><rect x="19.1" y="42" width="1.5" height="1.1" fill="#6aa8ff" opacity="0.83"/><rect x="20.8" y="45" width="1.5" height="1.1" fill="#6aa8ff" opacity="0.65"/><rect x="20.2" y="51" width="1.5" height="1.1" fill="#6aa8ff" opacity="0.86"/><rect x="19.8" y="60" width="1.5" height="1.1" fill="#6aa8ff" opacity="0.94"/><rect x="19.1" y="66" width="1.5" height="1.1" fill="#6aa8ff" opacity="0.54"/><rect x="20.8" y="75" width="1.5" height="1.1" fill="#6aa8ff" opacity="0.54"/><rect x="24.0" y="3" width="1.5" height="1.1" fill="#6aa8ff" opacity="0.66"/><rect x="24.6" y="6" width="1.5" height="1.1" fill="#6aa8ff" opacity="0.45"/><rect x="24.6" y="9" width="1.5" height="1.1" fill="#6aa8ff" opacity="0.50"/><rect x="25.0" y="15" width="1.5" height="1.1" fill="#6aa8ff" opacity="0.82"/><rect x="24.3" y="21" width="1.5" height="1.1" fill="#6aa8ff" opacity="0.90"/><rect x="23.3" y="30" width="1.5" height="1.1" fill="#6aa8ff" opacity="0.54"/><rect x="23.1" y="36" width="1.5" height="1.1" fill="#6aa8ff" opacity="0.45"/><rect x="23.1" y="39" width="1.5" height="1.1" fill="#ffffff" opacity="0.60"/><rect x="24.2" y="51" width="1.5" height="1.1" fill="#6aa8ff" opacity="0.63"/><rect x="23.1" y="54" width="1.5" height="1.1" fill="#6aa8ff" opacity="0.96"/><rect x="24.8" y="60" width="1.5" height="1.1" fill="#6aa8ff" opacity="0.76"/><rect x="24.5" y="69" width="1.5" height="1.1" fill="#6aa8ff" opacity="0.71"/><rect x="24.5" y="75" width="1.5" height="1.1" fill="#6aa8ff" opacity="0.50"/><rect x="27.2" y="3" width="1.5" height="1.1" fill="#6aa8ff" opacity="0.81"/><rect x="27.5" y="9" width="1.5" height="1.1" fill="#6aa8ff" opacity="0.43"/><rect x="27.1" y="15" width="1.5" height="1.1" fill="#6aa8ff" opacity="0.56"/><rect x="28.4" y="21" width="1.5" height="1.1" fill="#6aa8ff" opacity="0.45"/><rect x="28.3" y="24" width="1.5" height="1.1" fill="#6aa8ff" opacity="0.43"/><rect x="27.5" y="30" width="1.5" height="1.1" fill="#6aa8ff" opacity="0.76"/><rect x="27.8" y="33" width="1.5" height="1.1" fill="#6aa8ff" opacity="0.75"/><rect x="28.6" y="36" width="1.5" height="1.1" fill="#6aa8ff" opacity="0.89"/><rect x="28.2" y="39" width="1.5" height="1.1" fill="#6aa8ff" opacity="0.90"/><rect x="27.4" y="48" width="1.5" height="1.1" fill="#ffffff" opacity="0.41"/><rect x="28.5" y="51" width="1.5" height="1.1" fill="#6aa8ff" opacity="0.93"/><rect x="28.2" y="54" width="1.5" height="1.1" fill="#6aa8ff" opacity="0.66"/><rect x="27.3" y="57" width="1.5" height="1.1" fill="#ffffff" opacity="0.65"/><rect x="28.8" y="60" width="1.5" height="1.1" fill="#6aa8ff" opacity="0.59"/><rect x="27.3" y="63" width="1.5" height="1.1" fill="#6aa8ff" opacity="0.52"/><rect x="27.1" y="66" width="1.5" height="1.1" fill="#6aa8ff" opacity="0.50"/><rect x="28.3" y="72" width="1.5" height="1.1" fill="#6aa8ff" opacity="0.96"/><rect x="28.3" y="75" width="1.5" height="1.1" fill="#ffffff" opacity="0.96"/><rect x="31.3" y="3" width="1.5" height="1.1" fill="#6aa8ff" opacity="0.79"/><rect x="31.2" y="6" width="1.5" height="1.1" fill="#6aa8ff" opacity="0.37"/><rect x="31.6" y="9" width="1.5" height="1.1" fill="#6aa8ff" opacity="0.98"/><rect x="32.4" y="12" width="1.5" height="1.1" fill="#6aa8ff" opacity="0.53"/><rect x="32.9" y="15" width="1.5" height="1.1" fill="#6aa8ff" opacity="0.51"/><rect x="31.1" y="21" width="1.5" height="1.1" fill="#ffffff" opacity="0.98"/><rect x="33.0" y="27" width="1.5" height="1.1" fill="#6aa8ff" opacity="0.38"/><rect x="32.8" y="33" width="1.5" height="1.1" fill="#ffffff" opacity="0.41"/><rect x="31.5" y="36" width="1.5" height="1.1" fill="#ffffff" opacity="0.96"/><rect x="31.5" y="39" width="1.5" height="1.1" fill="#ffffff" opacity="0.61"/><rect x="31.1" y="42" width="1.5" height="1.1" fill="#ffffff" opacity="0.55"/><rect x="32.1" y="48" width="1.5" height="1.1" fill="#6aa8ff" opacity="0.68"/><rect x="32.1" y="51" width="1.5" height="1.1" fill="#ffffff" opacity="0.55"/><rect x="32.0" y="63" width="1.5" height="1.1" fill="#6aa8ff" opacity="0.36"/><rect x="32.8" y="69" width="1.5" height="1.1" fill="#6aa8ff" opacity="0.76"/><rect x="31.4" y="72" width="1.5" height="1.1" fill="#6aa8ff" opacity="0.64"/><rect x="32.5" y="75" width="1.5" height="1.1" fill="#ffffff" opacity="0.55"/><rect x="35.5" y="6" width="1.5" height="1.1" fill="#ffffff" opacity="0.43"/><rect x="35.5" y="9" width="1.5" height="1.1" fill="#6aa8ff" opacity="0.63"/><rect x="35.4" y="12" width="1.5" height="1.1" fill="#ffffff" opacity="0.81"/><rect x="35.8" y="15" width="1.5" height="1.1" fill="#ffffff" opacity="0.59"/><rect x="36.8" y="18" width="1.5" height="1.1" fill="#6aa8ff" opacity="0.84"/><rect x="36.9" y="30" width="1.5" height="1.1" fill="#6aa8ff" opacity="0.88"/><rect x="35.3" y="39" width="1.5" height="1.1" fill="#6aa8ff" opacity="0.88"/><rect x="36.4" y="42" width="1.5" height="1.1" fill="#6aa8ff" opacity="0.46"/><rect x="36.1" y="45" width="1.5" height="1.1" fill="#6aa8ff" opacity="0.39"/><rect x="35.7" y="48" width="1.5" height="1.1" fill="#ffffff" opacity="0.38"/><rect x="35.7" y="60" width="1.5" height="1.1" fill="#6aa8ff" opacity="0.63"/><rect x="36.5" y="63" width="1.5" height="1.1" fill="#6aa8ff" opacity="0.73"/><rect x="36.4" y="66" width="1.5" height="1.1" fill="#ffffff" opacity="0.69"/><rect x="35.2" y="69" width="1.5" height="1.1" fill="#6aa8ff" opacity="0.96"/><rect x="35.9" y="72" width="1.5" height="1.1" fill="#6aa8ff" opacity="0.94"/><rect x="36.1" y="75" width="1.5" height="1.1" fill="#6aa8ff" opacity="0.85"/><rect x="39.1" y="9" width="1.5" height="1.1" fill="#6aa8ff" opacity="0.88"/><rect x="40.8" y="15" width="1.5" height="1.1" fill="#6aa8ff" opacity="0.73"/><rect x="39.4" y="18" width="1.5" height="1.1" fill="#6aa8ff" opacity="0.49"/><rect x="39.7" y="24" width="1.5" height="1.1" fill="#6aa8ff" opacity="0.84"/><rect x="40.7" y="27" width="1.5" height="1.1" fill="#6aa8ff" opacity="0.99"/><rect x="40.0" y="33" width="1.5" height="1.1" fill="#6aa8ff" opacity="0.44"/><rect x="40.4" y="36" width="1.5" height="1.1" fill="#ffffff" opacity="0.46"/><rect x="40.4" y="42" width="1.5" height="1.1" fill="#6aa8ff" opacity="0.87"/><rect x="40.2" y="54" width="1.5" height="1.1" fill="#6aa8ff" opacity="0.36"/><rect x="39.1" y="57" width="1.5" height="1.1" fill="#6aa8ff" opacity="0.60"/><rect x="40.4" y="60" width="1.5" height="1.1" fill="#6aa8ff" opacity="0.60"/><rect x="40.8" y="63" width="1.5" height="1.1" fill="#6aa8ff" opacity="0.99"/><rect x="44.0" y="3" width="1.5" height="1.1" fill="#6aa8ff" opacity="0.74"/><rect x="43.7" y="6" width="1.5" height="1.1" fill="#ffffff" opacity="0.40"/><rect x="44.4" y="18" width="1.5" height="1.1" fill="#6aa8ff" opacity="0.95"/><rect x="44.9" y="21" width="1.5" height="1.1" fill="#6aa8ff" opacity="0.84"/><rect x="43.5" y="39" width="1.5" height="1.1" fill="#6aa8ff" opacity="0.69"/><rect x="43.4" y="48" width="1.5" height="1.1" fill="#6aa8ff" opacity="0.35"/><rect x="44.1" y="63" width="1.5" height="1.1" fill="#6aa8ff" opacity="0.42"/><rect x="43.6" y="69" width="1.5" height="1.1" fill="#6aa8ff" opacity="0.93"/><rect x="43.3" y="72" width="1.5" height="1.1" fill="#6aa8ff" opacity="0.75"/><rect x="48.7" y="6" width="1.5" height="1.1" fill="#6aa8ff" opacity="0.39"/><rect x="48.8" y="15" width="1.5" height="1.1" fill="#6aa8ff" opacity="0.63"/><rect x="48.9" y="18" width="1.5" height="1.1" fill="#6aa8ff" opacity="0.53"/><rect x="48.1" y="21" width="1.5" height="1.1" fill="#ffffff" opacity="0.37"/><rect x="48.3" y="27" width="1.5" height="1.1" fill="#6aa8ff" opacity="0.47"/><rect x="48.9" y="36" width="1.5" height="1.1" fill="#6aa8ff" opacity="0.67"/><rect x="48.9" y="39" width="1.5" height="1.1" fill="#6aa8ff" opacity="0.90"/><rect x="48.0" y="42" width="1.5" height="1.1" fill="#6aa8ff" opacity="0.80"/><rect x="47.2" y="45" width="1.5" height="1.1" fill="#ffffff" opacity="0.48"/><rect x="48.5" y="48" width="1.5" height="1.1" fill="#ffffff" opacity="0.75"/><rect x="47.4" y="75" width="1.5" height="1.1" fill="#ffffff" opacity="0.42"/><rect x="52.5" y="3" width="1.5" height="1.1" fill="#6aa8ff" opacity="0.65"/><rect x="51.8" y="6" width="1.5" height="1.1" fill="#6aa8ff" opacity="0.61"/><rect x="52.4" y="9" width="1.5" height="1.1" fill="#6aa8ff" opacity="0.74"/><rect x="51.1" y="12" width="1.5" height="1.1" fill="#6aa8ff" opacity="0.98"/><rect x="51.7" y="21" width="1.5" height="1.1" fill="#6aa8ff" opacity="0.43"/><rect x="52.4" y="30" width="1.5" height="1.1" fill="#6aa8ff" opacity="0.54"/><rect x="52.0" y="39" width="1.5" height="1.1" fill="#6aa8ff" opacity="0.57"/><rect x="52.3" y="42" width="1.5" height="1.1" fill="#6aa8ff" opacity="0.62"/><rect x="52.0" y="45" width="1.5" height="1.1" fill="#ffffff" opacity="0.53"/><rect x="51.7" y="54" width="1.5" height="1.1" fill="#ffffff" opacity="0.96"/><rect x="51.0" y="60" width="1.5" height="1.1" fill="#6aa8ff" opacity="0.85"/><rect x="52.0" y="63" width="1.5" height="1.1" fill="#6aa8ff" opacity="0.65"/><rect x="51.9" y="66" width="1.5" height="1.1" fill="#6aa8ff" opacity="0.49"/><rect x="52.9" y="69" width="1.5" height="1.1" fill="#6aa8ff" opacity="0.41"/><rect x="55.9" y="3" width="1.5" height="1.1" fill="#6aa8ff" opacity="0.61"/><rect x="55.8" y="18" width="1.5" height="1.1" fill="#6aa8ff" opacity="0.37"/><rect x="56.8" y="30" width="1.5" height="1.1" fill="#6aa8ff" opacity="1.00"/><rect x="56.9" y="33" width="1.5" height="1.1" fill="#6aa8ff" opacity="0.86"/><rect x="55.9" y="39" width="1.5" height="1.1" fill="#6aa8ff" opacity="0.62"/><rect x="55.3" y="42" width="1.5" height="1.1" fill="#ffffff" opacity="0.78"/><rect x="56.8" y="45" width="1.5" height="1.1" fill="#6aa8ff" opacity="0.40"/><rect x="56.9" y="51" width="1.5" height="1.1" fill="#6aa8ff" opacity="0.36"/><rect x="56.9" y="57" width="1.5" height="1.1" fill="#6aa8ff" opacity="0.50"/><rect x="55.5" y="60" width="1.5" height="1.1" fill="#6aa8ff" opacity="0.47"/><rect x="56.0" y="66" width="1.5" height="1.1" fill="#ffffff" opacity="0.85"/><rect x="55.7" y="75" width="1.5" height="1.1" fill="#6aa8ff" opacity="0.42"/><rect x="60.9" y="3" width="1.5" height="1.1" fill="#6aa8ff" opacity="0.66"/><rect x="60.1" y="6" width="1.5" height="1.1" fill="#6aa8ff" opacity="0.72"/><rect x="59.0" y="12" width="1.5" height="1.1" fill="#6aa8ff" opacity="0.66"/><rect x="60.6" y="18" width="1.5" height="1.1" fill="#6aa8ff" opacity="0.68"/><rect x="59.8" y="21" width="1.5" height="1.1" fill="#ffffff" opacity="0.68"/><rect x="59.9" y="24" width="1.5" height="1.1" fill="#6aa8ff" opacity="0.36"/><rect x="60.9" y="33" width="1.5" height="1.1" fill="#6aa8ff" opacity="0.69"/><rect x="59.2" y="42" width="1.5" height="1.1" fill="#6aa8ff" opacity="0.46"/><rect x="59.8" y="45" width="1.5" height="1.1" fill="#6aa8ff" opacity="0.83"/><rect x="59.3" y="51" width="1.5" height="1.1" fill="#6aa8ff" opacity="0.71"/><rect x="59.4" y="54" width="1.5" height="1.1" fill="#6aa8ff" opacity="0.67"/><rect x="59.7" y="57" width="1.5" height="1.1" fill="#ffffff" opacity="0.39"/><rect x="59.6" y="60" width="1.5" height="1.1" fill="#6aa8ff" opacity="0.98"/><rect x="59.8" y="69" width="1.5" height="1.1" fill="#6aa8ff" opacity="0.89"/><rect x="59.9" y="75" width="1.5" height="1.1" fill="#6aa8ff" opacity="0.52"/><rect x="151.5" y="6" width="1.5" height="1.1" fill="#ffffff" opacity="0.44"/><rect x="151.0" y="12" width="1.5" height="1.1" fill="#6aa8ff" opacity="0.38"/><rect x="151.4" y="18" width="1.5" height="1.1" fill="#ffffff" opacity="0.73"/><rect x="150.1" y="27" width="1.5" height="1.1" fill="#ffffff" opacity="0.97"/><rect x="151.3" y="33" width="1.5" height="1.1" fill="#6aa8ff" opacity="0.39"/><rect x="150.2" y="42" width="1.5" height="1.1" fill="#6aa8ff" opacity="0.77"/><rect x="151.5" y="48" width="1.5" height="1.1" fill="#ffffff" opacity="0.54"/><rect x="150.5" y="57" width="1.5" height="1.1" fill="#6aa8ff" opacity="0.45"/><rect x="150.2" y="63" width="1.5" height="1.1" fill="#6aa8ff" opacity="0.41"/><rect x="150.3" y="66" width="1.5" height="1.1" fill="#6aa8ff" opacity="0.75"/><rect x="150.9" y="69" width="1.5" height="1.1" fill="#6aa8ff" opacity="0.67"/><rect x="155.1" y="3" width="1.5" height="1.1" fill="#6aa8ff" opacity="0.52"/><rect x="154.6" y="15" width="1.5" height="1.1" fill="#6aa8ff" opacity="0.86"/><rect x="155.8" y="18" width="1.5" height="1.1" fill="#6aa8ff" opacity="0.52"/><rect x="155.9" y="21" width="1.5" height="1.1" fill="#6aa8ff" opacity="0.76"/><rect x="154.2" y="24" width="1.5" height="1.1" fill="#6aa8ff" opacity="0.85"/><rect x="155.3" y="36" width="1.5" height="1.1" fill="#6aa8ff" opacity="0.98"/><rect x="154.2" y="42" width="1.5" height="1.1" fill="#6aa8ff" opacity="0.62"/><rect x="155.7" y="45" width="1.5" height="1.1" fill="#6aa8ff" opacity="0.82"/><rect x="155.9" y="48" width="1.5" height="1.1" fill="#ffffff" opacity="0.55"/><rect x="154.1" y="60" width="1.5" height="1.1" fill="#6aa8ff" opacity="0.62"/><rect x="155.9" y="66" width="1.5" height="1.1" fill="#6aa8ff" opacity="0.42"/><rect x="154.2" y="72" width="1.5" height="1.1" fill="#6aa8ff" opacity="0.42"/><rect x="158.9" y="3" width="1.5" height="1.1" fill="#6aa8ff" opacity="0.99"/><rect x="158.9" y="6" width="1.5" height="1.1" fill="#6aa8ff" opacity="0.71"/><rect x="158.8" y="9" width="1.5" height="1.1" fill="#6aa8ff" opacity="0.68"/><rect x="158.3" y="18" width="1.5" height="1.1" fill="#6aa8ff" opacity="0.88"/><rect x="158.9" y="21" width="1.5" height="1.1" fill="#6aa8ff" opacity="0.96"/><rect x="158.9" y="33" width="1.5" height="1.1" fill="#6aa8ff" opacity="0.83"/><rect x="159.5" y="42" width="1.5" height="1.1" fill="#6aa8ff" opacity="0.48"/><rect x="158.3" y="45" width="1.5" height="1.1" fill="#ffffff" opacity="1.00"/><rect x="159.7" y="48" width="1.5" height="1.1" fill="#6aa8ff" opacity="0.64"/><rect x="159.2" y="51" width="1.5" height="1.1" fill="#ffffff" opacity="0.80"/><rect x="159.4" y="54" width="1.5" height="1.1" fill="#ffffff" opacity="0.58"/><rect x="159.2" y="57" width="1.5" height="1.1" fill="#6aa8ff" opacity="0.85"/><rect x="158.6" y="63" width="1.5" height="1.1" fill="#6aa8ff" opacity="0.92"/><rect x="158.8" y="66" width="1.5" height="1.1" fill="#ffffff" opacity="0.92"/><rect x="159.3" y="69" width="1.5" height="1.1" fill="#ffffff" opacity="0.98"/><rect x="163.7" y="3" width="1.5" height="1.1" fill="#6aa8ff" opacity="0.96"/><rect x="162.7" y="9" width="1.5" height="1.1" fill="#6aa8ff" opacity="0.89"/><rect x="163.6" y="27" width="1.5" height="1.1" fill="#ffffff" opacity="0.67"/><rect x="162.2" y="36" width="1.5" height="1.1" fill="#6aa8ff" opacity="0.70"/><rect x="162.5" y="39" width="1.5" height="1.1" fill="#6aa8ff" opacity="0.98"/><rect x="162.5" y="48" width="1.5" height="1.1" fill="#6aa8ff" opacity="0.77"/><rect x="163.5" y="51" width="1.5" height="1.1" fill="#6aa8ff" opacity="0.78"/><rect x="162.7" y="57" width="1.5" height="1.1" fill="#6aa8ff" opacity="0.55"/><rect x="162.5" y="66" width="1.5" height="1.1" fill="#ffffff" opacity="0.80"/><rect x="163.5" y="72" width="1.5" height="1.1" fill="#ffffff" opacity="0.39"/><rect x="163.6" y="75" width="1.5" height="1.1" fill="#6aa8ff" opacity="0.65"/><rect x="167.6" y="3" width="1.5" height="1.1" fill="#ffffff" opacity="0.69"/><rect x="166.4" y="27" width="1.5" height="1.1" fill="#6aa8ff" opacity="0.92"/><rect x="166.7" y="30" width="1.5" height="1.1" fill="#ffffff" opacity="0.57"/><rect x="166.9" y="33" width="1.5" height="1.1" fill="#ffffff" opacity="0.49"/><rect x="166.3" y="36" width="1.5" height="1.1" fill="#6aa8ff" opacity="0.82"/><rect x="166.8" y="48" width="1.5" height="1.1" fill="#6aa8ff" opacity="0.61"/><rect x="167.4" y="51" width="1.5" height="1.1" fill="#6aa8ff" opacity="0.65"/><rect x="167.8" y="72" width="1.5" height="1.1" fill="#6aa8ff" opacity="0.78"/><rect x="170.5" y="3" width="1.5" height="1.1" fill="#6aa8ff" opacity="0.47"/><rect x="170.7" y="12" width="1.5" height="1.1" fill="#6aa8ff" opacity="0.70"/><rect x="170.3" y="15" width="1.5" height="1.1" fill="#6aa8ff" opacity="0.74"/><rect x="170.9" y="18" width="1.5" height="1.1" fill="#ffffff" opacity="0.35"/><rect x="171.9" y="21" width="1.5" height="1.1" fill="#6aa8ff" opacity="0.35"/><rect x="170.3" y="27" width="1.5" height="1.1" fill="#ffffff" opacity="0.95"/><rect x="171.5" y="30" width="1.5" height="1.1" fill="#6aa8ff" opacity="0.39"/><rect x="171.8" y="33" width="1.5" height="1.1" fill="#6aa8ff" opacity="0.87"/><rect x="171.6" y="42" width="1.5" height="1.1" fill="#6aa8ff" opacity="0.63"/><rect x="170.1" y="45" width="1.5" height="1.1" fill="#6aa8ff" opacity="0.54"/><rect x="170.2" y="51" width="1.5" height="1.1" fill="#6aa8ff" opacity="0.78"/><rect x="171.6" y="57" width="1.5" height="1.1" fill="#6aa8ff" opacity="0.56"/><rect x="171.0" y="60" width="1.5" height="1.1" fill="#ffffff" opacity="0.79"/><rect x="171.3" y="63" width="1.5" height="1.1" fill="#6aa8ff" opacity="0.77"/><rect x="170.9" y="66" width="1.5" height="1.1" fill="#6aa8ff" opacity="0.68"/><rect x="170.1" y="69" width="1.5" height="1.1" fill="#6aa8ff" opacity="0.53"/><rect x="170.6" y="75" width="1.5" height="1.1" fill="#ffffff" opacity="0.54"/><rect x="175.9" y="6" width="1.5" height="1.1" fill="#6aa8ff" opacity="0.41"/><rect x="175.4" y="9" width="1.5" height="1.1" fill="#6aa8ff" opacity="0.57"/><rect x="174.7" y="12" width="1.5" height="1.1" fill="#6aa8ff" opacity="0.41"/><rect x="174.5" y="18" width="1.5" height="1.1" fill="#ffffff" opacity="0.92"/><rect x="175.0" y="21" width="1.5" height="1.1" fill="#6aa8ff" opacity="0.52"/><rect x="175.1" y="24" width="1.5" height="1.1" fill="#6aa8ff" opacity="0.68"/><rect x="174.8" y="27" width="1.5" height="1.1" fill="#6aa8ff" opacity="0.78"/><rect x="175.8" y="30" width="1.5" height="1.1" fill="#6aa8ff" opacity="0.44"/><rect x="175.2" y="33" width="1.5" height="1.1" fill="#6aa8ff" opacity="0.59"/><rect x="174.1" y="36" width="1.5" height="1.1" fill="#6aa8ff" opacity="0.64"/><rect x="174.1" y="39" width="1.5" height="1.1" fill="#6aa8ff" opacity="0.84"/><rect x="175.3" y="42" width="1.5" height="1.1" fill="#6aa8ff" opacity="0.76"/><rect x="174.7" y="45" width="1.5" height="1.1" fill="#ffffff" opacity="0.65"/><rect x="175.2" y="66" width="1.5" height="1.1" fill="#6aa8ff" opacity="0.66"/><rect x="175.6" y="69" width="1.5" height="1.1" fill="#6aa8ff" opacity="0.93"/><rect x="178.3" y="3" width="1.5" height="1.1" fill="#6aa8ff" opacity="0.91"/><rect x="178.8" y="12" width="1.5" height="1.1" fill="#ffffff" opacity="0.53"/><rect x="178.9" y="18" width="1.5" height="1.1" fill="#6aa8ff" opacity="0.52"/><rect x="179.6" y="24" width="1.5" height="1.1" fill="#ffffff" opacity="0.54"/><rect x="179.0" y="30" width="1.5" height="1.1" fill="#6aa8ff" opacity="0.67"/><rect x="178.3" y="39" width="1.5" height="1.1" fill="#6aa8ff" opacity="0.57"/><rect x="179.1" y="45" width="1.5" height="1.1" fill="#6aa8ff" opacity="0.67"/><rect x="179.6" y="48" width="1.5" height="1.1" fill="#6aa8ff" opacity="0.50"/><rect x="178.2" y="51" width="1.5" height="1.1" fill="#ffffff" opacity="0.65"/><rect x="178.5" y="54" width="1.5" height="1.1" fill="#6aa8ff" opacity="0.99"/><rect x="179.5" y="57" width="1.5" height="1.1" fill="#6aa8ff" opacity="0.42"/><rect x="178.1" y="69" width="1.5" height="1.1" fill="#6aa8ff" opacity="0.46"/><rect x="178.0" y="72" width="1.5" height="1.1" fill="#6aa8ff" opacity="0.82"/><rect x="179.5" y="75" width="1.5" height="1.1" fill="#6aa8ff" opacity="0.90"/><rect x="182.1" y="12" width="1.5" height="1.1" fill="#6aa8ff" opacity="0.72"/><rect x="182.2" y="15" width="1.5" height="1.1" fill="#ffffff" opacity="0.65"/><rect x="183.0" y="18" width="1.5" height="1.1" fill="#6aa8ff" opacity="0.59"/><rect x="183.3" y="30" width="1.5" height="1.1" fill="#6aa8ff" opacity="0.61"/><rect x="183.2" y="39" width="1.5" height="1.1" fill="#ffffff" opacity="0.45"/><rect x="182.5" y="42" width="1.5" height="1.1" fill="#6aa8ff" opacity="0.35"/><rect x="182.6" y="45" width="1.5" height="1.1" fill="#6aa8ff" opacity="0.78"/><rect x="183.2" y="51" width="1.5" height="1.1" fill="#ffffff" opacity="0.95"/><rect x="183.4" y="60" width="1.5" height="1.1" fill="#6aa8ff" opacity="0.92"/><rect x="183.1" y="63" width="1.5" height="1.1" fill="#6aa8ff" opacity="0.47"/><rect x="183.0" y="66" width="1.5" height="1.1" fill="#6aa8ff" opacity="0.83"/><rect x="183.3" y="75" width="1.5" height="1.1" fill="#6aa8ff" opacity="0.71"/><rect x="187.2" y="3" width="1.5" height="1.1" fill="#6aa8ff" opacity="0.53"/><rect x="186.4" y="9" width="1.5" height="1.1" fill="#6aa8ff" opacity="0.64"/><rect x="187.0" y="12" width="1.5" height="1.1" fill="#ffffff" opacity="0.95"/><rect x="186.3" y="15" width="1.5" height="1.1" fill="#6aa8ff" opacity="0.37"/><rect x="186.7" y="18" width="1.5" height="1.1" fill="#ffffff" opacity="0.94"/><rect x="187.8" y="27" width="1.5" height="1.1" fill="#6aa8ff" opacity="0.50"/><rect x="187.0" y="30" width="1.5" height="1.1" fill="#6aa8ff" opacity="0.52"/><rect x="187.0" y="33" width="1.5" height="1.1" fill="#6aa8ff" opacity="0.78"/><rect x="186.7" y="48" width="1.5" height="1.1" fill="#6aa8ff" opacity="0.68"/><rect x="187.3" y="54" width="1.5" height="1.1" fill="#6aa8ff" opacity="0.75"/><rect x="186.1" y="69" width="1.5" height="1.1" fill="#6aa8ff" opacity="0.75"/><rect x="187.4" y="75" width="1.5" height="1.1" fill="#6aa8ff" opacity="0.67"/><rect x="191.1" y="6" width="1.5" height="1.1" fill="#6aa8ff" opacity="0.96"/><rect x="190.2" y="12" width="1.5" height="1.1" fill="#6aa8ff" opacity="0.81"/><rect x="191.4" y="30" width="1.5" height="1.1" fill="#6aa8ff" opacity="0.67"/><rect x="191.9" y="42" width="1.5" height="1.1" fill="#6aa8ff" opacity="0.63"/><rect x="191.3" y="48" width="1.5" height="1.1" fill="#6aa8ff" opacity="0.85"/><rect x="191.1" y="63" width="1.5" height="1.1" fill="#6aa8ff" opacity="0.67"/><rect x="191.0" y="66" width="1.5" height="1.1" fill="#6aa8ff" opacity="0.97"/><rect x="190.6" y="69" width="1.5" height="1.1" fill="#6aa8ff" opacity="0.47"/><rect x="191.3" y="72" width="1.5" height="1.1" fill="#6aa8ff" opacity="0.88"/><rect x="194.7" y="6" width="1.5" height="1.1" fill="#6aa8ff" opacity="0.56"/><rect x="194.6" y="9" width="1.5" height="1.1" fill="#ffffff" opacity="0.43"/><rect x="195.3" y="18" width="1.5" height="1.1" fill="#6aa8ff" opacity="0.51"/><rect x="194.5" y="21" width="1.5" height="1.1" fill="#6aa8ff" opacity="0.43"/><rect x="194.9" y="24" width="1.5" height="1.1" fill="#ffffff" opacity="0.86"/><rect x="195.8" y="36" width="1.5" height="1.1" fill="#ffffff" opacity="0.97"/><rect x="196.0" y="39" width="1.5" height="1.1" fill="#6aa8ff" opacity="0.35"/><rect x="195.8" y="51" width="1.5" height="1.1" fill="#6aa8ff" opacity="0.55"/><rect x="194.6" y="57" width="1.5" height="1.1" fill="#6aa8ff" opacity="0.99"/><rect x="194.9" y="60" width="1.5" height="1.1" fill="#6aa8ff" opacity="0.63"/><rect x="194.6" y="63" width="1.5" height="1.1" fill="#6aa8ff" opacity="0.97"/><rect x="194.5" y="69" width="1.5" height="1.1" fill="#ffffff" opacity="0.62"/><rect x="198.2" y="15" width="1.5" height="1.1" fill="#ffffff" opacity="0.45"/><rect x="198.7" y="18" width="1.5" height="1.1" fill="#6aa8ff" opacity="0.36"/><rect x="198.4" y="21" width="1.5" height="1.1" fill="#6aa8ff" opacity="0.55"/><rect x="199.8" y="27" width="1.5" height="1.1" fill="#ffffff" opacity="0.39"/><rect x="199.8" y="33" width="1.5" height="1.1" fill="#ffffff" opacity="0.81"/><rect x="199.2" y="42" width="1.5" height="1.1" fill="#6aa8ff" opacity="0.63"/><rect x="199.0" y="45" width="1.5" height="1.1" fill="#ffffff" opacity="0.50"/><rect x="199.8" y="48" width="1.5" height="1.1" fill="#6aa8ff" opacity="0.64"/><rect x="199.9" y="51" width="1.5" height="1.1" fill="#ffffff" opacity="0.86"/><rect x="200.0" y="57" width="1.5" height="1.1" fill="#6aa8ff" opacity="0.93"/><rect x="199.9" y="60" width="1.5" height="1.1" fill="#6aa8ff" opacity="0.95"/><rect x="199.8" y="66" width="1.5" height="1.1" fill="#6aa8ff" opacity="0.53"/><rect x="198.3" y="72" width="1.5" height="1.1" fill="#6aa8ff" opacity="0.58"/><rect x="198.5" y="75" width="1.5" height="1.1" fill="#6aa8ff" opacity="0.69"/><rect x="203.5" y="3" width="1.5" height="1.1" fill="#6aa8ff" opacity="0.97"/><rect x="202.4" y="9" width="1.5" height="1.1" fill="#ffffff" opacity="0.92"/><rect x="202.4" y="21" width="1.5" height="1.1" fill="#6aa8ff" opacity="0.82"/><rect x="203.9" y="24" width="1.5" height="1.1" fill="#ffffff" opacity="0.42"/><rect x="203.6" y="30" width="1.5" height="1.1" fill="#6aa8ff" opacity="0.62"/><rect x="203.9" y="33" width="1.5" height="1.1" fill="#6aa8ff" opacity="0.46"/><rect x="203.3" y="36" width="1.5" height="1.1" fill="#6aa8ff" opacity="0.65"/><rect x="203.2" y="39" width="1.5" height="1.1" fill="#6aa8ff" opacity="0.54"/><rect x="203.9" y="45" width="1.5" height="1.1" fill="#6aa8ff" opacity="0.79"/><rect x="203.2" y="48" width="1.5" height="1.1" fill="#6aa8ff" opacity="0.86"/><rect x="202.0" y="60" width="1.5" height="1.1" fill="#ffffff" opacity="0.62"/><rect x="202.0" y="66" width="1.5" height="1.1" fill="#ffffff" opacity="0.52"/><rect x="203.8" y="72" width="1.5" height="1.1" fill="#6aa8ff" opacity="0.63"/><rect x="207.2" y="3" width="1.5" height="1.1" fill="#ffffff" opacity="0.99"/><rect x="207.4" y="9" width="1.5" height="1.1" fill="#6aa8ff" opacity="0.93"/><rect x="207.2" y="12" width="1.5" height="1.1" fill="#6aa8ff" opacity="0.89"/><rect x="208.0" y="18" width="1.5" height="1.1" fill="#6aa8ff" opacity="0.52"/><rect x="206.5" y="24" width="1.5" height="1.1" fill="#6aa8ff" opacity="0.72"/><rect x="207.2" y="27" width="1.5" height="1.1" fill="#6aa8ff" opacity="0.42"/><rect x="206.7" y="42" width="1.5" height="1.1" fill="#6aa8ff" opacity="0.62"/><rect x="207.5" y="51" width="1.5" height="1.1" fill="#6aa8ff" opacity="0.97"/><rect x="206.7" y="63" width="1.5" height="1.1" fill="#6aa8ff" opacity="0.44"/><rect x="207.5" y="66" width="1.5" height="1.1" fill="#6aa8ff" opacity="0.88"/><rect x="206.4" y="69" width="1.5" height="1.1" fill="#6aa8ff" opacity="0.44"/>
<rect x="62" y="0" width="5" height="79" fill="#080c28"/><rect x="144" y="0" width="5" height="79" fill="#080c28"/>
<rect x="67" y="0" width="77" height="79" fill="#121a52"/>
<path d="M82 0H128L108 52H102Z" fill="url(#gcl)"/>
<rect x="81" y="0" width="2.5" height="79" fill="#0a0e30"/><rect x="126.5" y="0" width="2.5" height="79" fill="#0a0e30"/>
<rect x="98" y="0" width="2" height="79" fill="#0a0e30" opacity=".7"/><rect x="110" y="0" width="2" height="79" fill="#0a0e30" opacity=".7"/>
<rect x="68" y="26" width="1.2" height="1" fill="#c8d4ff" opacity="0.75"/><rect x="68" y="34" width="1.2" height="1" fill="#5a7cff" opacity="0.66"/><rect x="68" y="38" width="1.2" height="1" fill="#c8d4ff" opacity="0.73"/><rect x="68" y="54" width="1.2" height="1" fill="#5a7cff" opacity="0.63"/><rect x="68" y="56" width="1.2" height="1" fill="#c8d4ff" opacity="0.62"/><rect x="68" y="66" width="1.2" height="1" fill="#5a7cff" opacity="0.85"/><rect x="70" y="28" width="1.2" height="1" fill="#5a7cff" opacity="0.91"/><rect x="70" y="32" width="1.2" height="1" fill="#5a7cff" opacity="0.72"/><rect x="70" y="36" width="1.2" height="1" fill="#5a7cff" opacity="0.79"/><rect x="70" y="40" width="1.2" height="1" fill="#5a7cff" opacity="0.47"/><rect x="70" y="44" width="1.2" height="1" fill="#5a7cff" opacity="0.49"/><rect x="70" y="46" width="1.2" height="1" fill="#5a7cff" opacity="0.70"/><rect x="70" y="50" width="1.2" height="1" fill="#c8d4ff" opacity="0.62"/><rect x="70" y="54" width="1.2" height="1" fill="#5a7cff" opacity="0.93"/><rect x="70" y="58" width="1.2" height="1" fill="#5a7cff" opacity="0.94"/><rect x="70" y="62" width="1.2" height="1" fill="#5a7cff" opacity="0.97"/><rect x="70" y="66" width="1.2" height="1" fill="#c8d4ff" opacity="0.78"/><rect x="70" y="68" width="1.2" height="1" fill="#c8d4ff" opacity="0.62"/><rect x="70" y="70" width="1.2" height="1" fill="#5a7cff" opacity="0.44"/><rect x="72" y="30" width="1.2" height="1" fill="#5a7cff" opacity="0.72"/><rect x="72" y="42" width="1.2" height="1" fill="#c8d4ff" opacity="0.92"/><rect x="72" y="46" width="1.2" height="1" fill="#5a7cff" opacity="0.77"/><rect x="72" y="54" width="1.2" height="1" fill="#5a7cff" opacity="0.83"/><rect x="72" y="58" width="1.2" height="1" fill="#5a7cff" opacity="0.96"/><rect x="72" y="62" width="1.2" height="1" fill="#5a7cff" opacity="0.99"/><rect x="72" y="64" width="1.2" height="1" fill="#c8d4ff" opacity="0.84"/><rect x="74" y="26" width="1.2" height="1" fill="#5a7cff" opacity="0.52"/><rect x="74" y="28" width="1.2" height="1" fill="#5a7cff" opacity="0.66"/><rect x="74" y="32" width="1.2" height="1" fill="#5a7cff" opacity="0.56"/><rect x="74" y="34" width="1.2" height="1" fill="#c8d4ff" opacity="0.59"/><rect x="74" y="46" width="1.2" height="1" fill="#5a7cff" opacity="0.50"/><rect x="74" y="48" width="1.2" height="1" fill="#5a7cff" opacity="0.50"/><rect x="74" y="54" width="1.2" height="1" fill="#c8d4ff" opacity="0.49"/><rect x="74" y="56" width="1.2" height="1" fill="#5a7cff" opacity="0.44"/><rect x="74" y="60" width="1.2" height="1" fill="#5a7cff" opacity="0.56"/><rect x="74" y="68" width="1.2" height="1" fill="#5a7cff" opacity="0.68"/><rect x="76" y="30" width="1.2" height="1" fill="#5a7cff" opacity="0.62"/><rect x="76" y="38" width="1.2" height="1" fill="#c8d4ff" opacity="0.65"/><rect x="76" y="44" width="1.2" height="1" fill="#5a7cff" opacity="0.94"/><rect x="76" y="68" width="1.2" height="1" fill="#5a7cff" opacity="0.69"/><rect x="78" y="32" width="1.2" height="1" fill="#c8d4ff" opacity="0.60"/><rect x="78" y="38" width="1.2" height="1" fill="#c8d4ff" opacity="0.55"/><rect x="78" y="40" width="1.2" height="1" fill="#c8d4ff" opacity="0.85"/><rect x="78" y="42" width="1.2" height="1" fill="#c8d4ff" opacity="0.77"/><rect x="78" y="44" width="1.2" height="1" fill="#5a7cff" opacity="0.79"/><rect x="78" y="52" width="1.2" height="1" fill="#5a7cff" opacity="0.63"/><rect x="78" y="64" width="1.2" height="1" fill="#c8d4ff" opacity="0.75"/><rect x="78" y="68" width="1.2" height="1" fill="#c8d4ff" opacity="0.63"/><rect x="80" y="32" width="1.2" height="1" fill="#5a7cff" opacity="0.70"/><rect x="80" y="34" width="1.2" height="1" fill="#5a7cff" opacity="0.44"/><rect x="80" y="50" width="1.2" height="1" fill="#5a7cff" opacity="0.70"/><rect x="80" y="52" width="1.2" height="1" fill="#5a7cff" opacity="0.90"/><rect x="80" y="56" width="1.2" height="1" fill="#c8d4ff" opacity="0.78"/><rect x="80" y="60" width="1.2" height="1" fill="#5a7cff" opacity="0.64"/><rect x="84" y="28" width="1.2" height="1" fill="#c8d4ff" opacity="0.95"/><rect x="84" y="30" width="1.2" height="1" fill="#5a7cff" opacity="0.56"/><rect x="84" y="36" width="1.2" height="1" fill="#c8d4ff" opacity="0.97"/><rect x="84" y="38" width="1.2" height="1" fill="#c8d4ff" opacity="0.84"/><rect x="84" y="42" width="1.2" height="1" fill="#5a7cff" opacity="0.99"/><rect x="84" y="44" width="1.2" height="1" fill="#5a7cff" opacity="0.64"/><rect x="84" y="54" width="1.2" height="1" fill="#5a7cff" opacity="0.82"/><rect x="84" y="56" width="1.2" height="1" fill="#c8d4ff" opacity="0.99"/><rect x="84" y="62" width="1.2" height="1" fill="#5a7cff" opacity="0.99"/><rect x="86" y="30" width="1.2" height="1" fill="#c8d4ff" opacity="0.97"/><rect x="86" y="36" width="1.2" height="1" fill="#c8d4ff" opacity="0.81"/><rect x="86" y="42" width="1.2" height="1" fill="#5a7cff" opacity="0.87"/><rect x="86" y="54" width="1.2" height="1" fill="#5a7cff" opacity="0.98"/><rect x="86" y="58" width="1.2" height="1" fill="#5a7cff" opacity="0.89"/><rect x="86" y="60" width="1.2" height="1" fill="#5a7cff" opacity="0.96"/><rect x="86" y="62" width="1.2" height="1" fill="#5a7cff" opacity="0.63"/><rect x="88" y="28" width="1.2" height="1" fill="#5a7cff" opacity="0.64"/><rect x="88" y="30" width="1.2" height="1" fill="#5a7cff" opacity="0.75"/><rect x="88" y="32" width="1.2" height="1" fill="#5a7cff" opacity="0.69"/><rect x="88" y="38" width="1.2" height="1" fill="#5a7cff" opacity="0.73"/><rect x="88" y="40" width="1.2" height="1" fill="#5a7cff" opacity="0.98"/><rect x="88" y="44" width="1.2" height="1" fill="#5a7cff" opacity="0.77"/><rect x="88" y="58" width="1.2" height="1" fill="#c8d4ff" opacity="0.60"/><rect x="88" y="60" width="1.2" height="1" fill="#5a7cff" opacity="1.00"/><rect x="88" y="64" width="1.2" height="1" fill="#5a7cff" opacity="0.91"/><rect x="88" y="66" width="1.2" height="1" fill="#5a7cff" opacity="0.70"/><rect x="88" y="68" width="1.2" height="1" fill="#c8d4ff" opacity="0.64"/><rect x="88" y="70" width="1.2" height="1" fill="#c8d4ff" opacity="0.76"/><rect x="90" y="26" width="1.2" height="1" fill="#5a7cff" opacity="0.98"/><rect x="90" y="30" width="1.2" height="1" fill="#5a7cff" opacity="0.60"/><rect x="90" y="44" width="1.2" height="1" fill="#c8d4ff" opacity="0.62"/><rect x="90" y="48" width="1.2" height="1" fill="#c8d4ff" opacity="0.59"/><rect x="90" y="54" width="1.2" height="1" fill="#c8d4ff" opacity="0.41"/><rect x="90" y="56" width="1.2" height="1" fill="#5a7cff" opacity="0.67"/><rect x="90" y="66" width="1.2" height="1" fill="#5a7cff" opacity="0.84"/><rect x="90" y="68" width="1.2" height="1" fill="#c8d4ff" opacity="0.87"/><rect x="92" y="30" width="1.2" height="1" fill="#5a7cff" opacity="0.52"/><rect x="92" y="32" width="1.2" height="1" fill="#5a7cff" opacity="0.89"/><rect x="92" y="34" width="1.2" height="1" fill="#5a7cff" opacity="0.84"/><rect x="92" y="36" width="1.2" height="1" fill="#5a7cff" opacity="1.00"/><rect x="92" y="38" width="1.2" height="1" fill="#5a7cff" opacity="0.93"/><rect x="92" y="42" width="1.2" height="1" fill="#c8d4ff" opacity="0.66"/><rect x="92" y="44" width="1.2" height="1" fill="#5a7cff" opacity="0.74"/><rect x="92" y="54" width="1.2" height="1" fill="#c8d4ff" opacity="0.91"/><rect x="92" y="70" width="1.2" height="1" fill="#5a7cff" opacity="0.95"/><rect x="94" y="28" width="1.2" height="1" fill="#5a7cff" opacity="1.00"/><rect x="94" y="52" width="1.2" height="1" fill="#5a7cff" opacity="0.56"/><rect x="94" y="54" width="1.2" height="1" fill="#5a7cff" opacity="0.54"/><rect x="94" y="62" width="1.2" height="1" fill="#c8d4ff" opacity="0.79"/><rect x="94" y="70" width="1.2" height="1" fill="#5a7cff" opacity="0.87"/><rect x="96" y="32" width="1.2" height="1" fill="#c8d4ff" opacity="0.64"/><rect x="96" y="34" width="1.2" height="1" fill="#c8d4ff" opacity="0.97"/><rect x="96" y="54" width="1.2" height="1" fill="#5a7cff" opacity="0.79"/><rect x="96" y="56" width="1.2" height="1" fill="#5a7cff" opacity="0.56"/><rect x="96" y="64" width="1.2" height="1" fill="#5a7cff" opacity="0.97"/><rect x="96" y="68" width="1.2" height="1" fill="#5a7cff" opacity="0.47"/><rect x="111" y="26" width="1.2" height="1" fill="#5a7cff" opacity="0.57"/><rect x="111" y="28" width="1.2" height="1" fill="#5a7cff" opacity="0.54"/><rect x="111" y="30" width="1.2" height="1" fill="#5a7cff" opacity="0.47"/><rect x="111" y="32" width="1.2" height="1" fill="#5a7cff" opacity="0.43"/><rect x="111" y="38" width="1.2" height="1" fill="#5a7cff" opacity="0.70"/><rect x="111" y="40" width="1.2" height="1" fill="#5a7cff" opacity="0.40"/><rect x="111" y="42" width="1.2" height="1" fill="#5a7cff" opacity="0.91"/><rect x="111" y="44" width="1.2" height="1" fill="#5a7cff" opacity="0.97"/><rect x="111" y="46" width="1.2" height="1" fill="#c8d4ff" opacity="0.55"/><rect x="111" y="50" width="1.2" height="1" fill="#5a7cff" opacity="0.96"/><rect x="111" y="54" width="1.2" height="1" fill="#5a7cff" opacity="0.60"/><rect x="111" y="70" width="1.2" height="1" fill="#5a7cff" opacity="0.56"/><rect x="113" y="26" width="1.2" height="1" fill="#5a7cff" opacity="0.69"/><rect x="113" y="28" width="1.2" height="1" fill="#5a7cff" opacity="0.98"/><rect x="113" y="44" width="1.2" height="1" fill="#5a7cff" opacity="0.65"/><rect x="113" y="48" width="1.2" height="1" fill="#5a7cff" opacity="0.52"/><rect x="113" y="54" width="1.2" height="1" fill="#c8d4ff" opacity="0.68"/><rect x="113" y="66" width="1.2" height="1" fill="#c8d4ff" opacity="0.48"/><rect x="113" y="70" width="1.2" height="1" fill="#5a7cff" opacity="0.48"/><rect x="115" y="28" width="1.2" height="1" fill="#c8d4ff" opacity="0.76"/><rect x="115" y="32" width="1.2" height="1" fill="#5a7cff" opacity="0.72"/><rect x="115" y="44" width="1.2" height="1" fill="#c8d4ff" opacity="0.68"/><rect x="115" y="46" width="1.2" height="1" fill="#5a7cff" opacity="0.69"/><rect x="115" y="56" width="1.2" height="1" fill="#5a7cff" opacity="0.78"/><rect x="115" y="58" width="1.2" height="1" fill="#5a7cff" opacity="0.68"/><rect x="115" y="62" width="1.2" height="1" fill="#5a7cff" opacity="0.68"/><rect x="117" y="28" width="1.2" height="1" fill="#5a7cff" opacity="0.95"/><rect x="117" y="30" width="1.2" height="1" fill="#c8d4ff" opacity="0.68"/><rect x="117" y="32" width="1.2" height="1" fill="#5a7cff" opacity="0.61"/><rect x="117" y="34" width="1.2" height="1" fill="#5a7cff" opacity="0.75"/><rect x="117" y="38" width="1.2" height="1" fill="#5a7cff" opacity="0.77"/><rect x="117" y="44" width="1.2" height="1" fill="#5a7cff" opacity="0.74"/><rect x="117" y="64" width="1.2" height="1" fill="#5a7cff" opacity="0.58"/><rect x="117" y="66" width="1.2" height="1" fill="#c8d4ff" opacity="0.81"/><rect x="119" y="32" width="1.2" height="1" fill="#5a7cff" opacity="0.99"/><rect x="119" y="34" width="1.2" height="1" fill="#c8d4ff" opacity="0.47"/><rect x="119" y="36" width="1.2" height="1" fill="#5a7cff" opacity="0.65"/><rect x="119" y="42" width="1.2" height="1" fill="#5a7cff" opacity="0.56"/><rect x="119" y="44" width="1.2" height="1" fill="#c8d4ff" opacity="0.55"/><rect x="119" y="46" width="1.2" height="1" fill="#5a7cff" opacity="0.72"/><rect x="119" y="50" width="1.2" height="1" fill="#c8d4ff" opacity="0.94"/><rect x="119" y="52" width="1.2" height="1" fill="#5a7cff" opacity="0.58"/><rect x="119" y="60" width="1.2" height="1" fill="#5a7cff" opacity="0.82"/><rect x="119" y="64" width="1.2" height="1" fill="#5a7cff" opacity="0.44"/><rect x="121" y="28" width="1.2" height="1" fill="#5a7cff" opacity="0.65"/><rect x="121" y="34" width="1.2" height="1" fill="#c8d4ff" opacity="0.79"/><rect x="121" y="38" width="1.2" height="1" fill="#5a7cff" opacity="0.93"/><rect x="121" y="44" width="1.2" height="1" fill="#c8d4ff" opacity="0.75"/><rect x="121" y="54" width="1.2" height="1" fill="#5a7cff" opacity="0.62"/><rect x="121" y="56" width="1.2" height="1" fill="#c8d4ff" opacity="0.95"/><rect x="121" y="60" width="1.2" height="1" fill="#c8d4ff" opacity="0.99"/><rect x="121" y="62" width="1.2" height="1" fill="#5a7cff" opacity="0.54"/><rect x="121" y="64" width="1.2" height="1" fill="#c8d4ff" opacity="0.68"/><rect x="121" y="68" width="1.2" height="1" fill="#5a7cff" opacity="0.48"/><rect x="123" y="32" width="1.2" height="1" fill="#5a7cff" opacity="0.44"/><rect x="123" y="36" width="1.2" height="1" fill="#5a7cff" opacity="0.57"/><rect x="123" y="42" width="1.2" height="1" fill="#5a7cff" opacity="0.66"/><rect x="123" y="44" width="1.2" height="1" fill="#5a7cff" opacity="0.72"/><rect x="123" y="48" width="1.2" height="1" fill="#5a7cff" opacity="0.52"/><rect x="123" y="52" width="1.2" height="1" fill="#5a7cff" opacity="0.51"/><rect x="123" y="54" width="1.2" height="1" fill="#c8d4ff" opacity="0.58"/><rect x="123" y="58" width="1.2" height="1" fill="#c8d4ff" opacity="0.94"/><rect x="123" y="60" width="1.2" height="1" fill="#c8d4ff" opacity="0.64"/><rect x="123" y="70" width="1.2" height="1" fill="#5a7cff" opacity="0.44"/><rect x="128" y="38" width="1.2" height="1" fill="#5a7cff" opacity="0.50"/><rect x="128" y="44" width="1.2" height="1" fill="#5a7cff" opacity="0.77"/><rect x="128" y="46" width="1.2" height="1" fill="#5a7cff" opacity="0.78"/><rect x="128" y="52" width="1.2" height="1" fill="#c8d4ff" opacity="0.74"/><rect x="128" y="54" width="1.2" height="1" fill="#5a7cff" opacity="0.69"/><rect x="128" y="56" width="1.2" height="1" fill="#c8d4ff" opacity="0.50"/><rect x="128" y="70" width="1.2" height="1" fill="#5a7cff" opacity="0.94"/><rect x="130" y="26" width="1.2" height="1" fill="#5a7cff" opacity="0.74"/><rect x="130" y="28" width="1.2" height="1" fill="#5a7cff" opacity="0.88"/><rect x="130" y="36" width="1.2" height="1" fill="#5a7cff" opacity="0.81"/><rect x="130" y="46" width="1.2" height="1" fill="#c8d4ff" opacity="0.85"/><rect x="130" y="50" width="1.2" height="1" fill="#5a7cff" opacity="0.70"/><rect x="130" y="52" width="1.2" height="1" fill="#5a7cff" opacity="0.57"/><rect x="130" y="58" width="1.2" height="1" fill="#5a7cff" opacity="0.49"/><rect x="130" y="60" width="1.2" height="1" fill="#c8d4ff" opacity="0.61"/><rect x="130" y="62" width="1.2" height="1" fill="#c8d4ff" opacity="0.96"/><rect x="130" y="64" width="1.2" height="1" fill="#5a7cff" opacity="0.53"/><rect x="130" y="66" width="1.2" height="1" fill="#c8d4ff" opacity="0.47"/><rect x="132" y="26" width="1.2" height="1" fill="#c8d4ff" opacity="0.78"/><rect x="132" y="28" width="1.2" height="1" fill="#c8d4ff" opacity="0.66"/><rect x="132" y="32" width="1.2" height="1" fill="#5a7cff" opacity="0.51"/><rect x="132" y="36" width="1.2" height="1" fill="#5a7cff" opacity="0.96"/><rect x="132" y="56" width="1.2" height="1" fill="#5a7cff" opacity="0.54"/><rect x="132" y="58" width="1.2" height="1" fill="#5a7cff" opacity="0.59"/><rect x="132" y="62" width="1.2" height="1" fill="#5a7cff" opacity="0.68"/><rect x="132" y="66" width="1.2" height="1" fill="#5a7cff" opacity="0.89"/><rect x="132" y="68" width="1.2" height="1" fill="#c8d4ff" opacity="0.63"/><rect x="134" y="28" width="1.2" height="1" fill="#5a7cff" opacity="0.95"/><rect x="134" y="30" width="1.2" height="1" fill="#c8d4ff" opacity="0.92"/><rect x="134" y="42" width="1.2" height="1" fill="#5a7cff" opacity="0.95"/><rect x="134" y="64" width="1.2" height="1" fill="#5a7cff" opacity="0.48"/><rect x="134" y="66" width="1.2" height="1" fill="#5a7cff" opacity="0.70"/><rect x="136" y="28" width="1.2" height="1" fill="#5a7cff" opacity="0.59"/><rect x="136" y="30" width="1.2" height="1" fill="#5a7cff" opacity="0.99"/><rect x="136" y="38" width="1.2" height="1" fill="#5a7cff" opacity="0.96"/><rect x="136" y="40" width="1.2" height="1" fill="#c8d4ff" opacity="0.92"/><rect x="136" y="50" width="1.2" height="1" fill="#5a7cff" opacity="0.86"/><rect x="136" y="56" width="1.2" height="1" fill="#5a7cff" opacity="0.45"/><rect x="136" y="58" width="1.2" height="1" fill="#5a7cff" opacity="0.96"/><rect x="138" y="30" width="1.2" height="1" fill="#5a7cff" opacity="0.46"/><rect x="138" y="32" width="1.2" height="1" fill="#5a7cff" opacity="0.43"/><rect x="138" y="36" width="1.2" height="1" fill="#5a7cff" opacity="0.56"/><rect x="138" y="42" width="1.2" height="1" fill="#5a7cff" opacity="0.98"/><rect x="138" y="44" width="1.2" height="1" fill="#c8d4ff" opacity="0.52"/><rect x="138" y="46" width="1.2" height="1" fill="#c8d4ff" opacity="0.98"/><rect x="138" y="50" width="1.2" height="1" fill="#5a7cff" opacity="0.75"/><rect x="138" y="52" width="1.2" height="1" fill="#5a7cff" opacity="0.47"/><rect x="138" y="60" width="1.2" height="1" fill="#c8d4ff" opacity="0.78"/><rect x="138" y="62" width="1.2" height="1" fill="#5a7cff" opacity="0.84"/><rect x="138" y="64" width="1.2" height="1" fill="#5a7cff" opacity="0.99"/><rect x="138" y="70" width="1.2" height="1" fill="#5a7cff" opacity="0.53"/><rect x="140" y="26" width="1.2" height="1" fill="#5a7cff" opacity="0.67"/><rect x="140" y="30" width="1.2" height="1" fill="#5a7cff" opacity="0.72"/><rect x="140" y="36" width="1.2" height="1" fill="#5a7cff" opacity="0.90"/><rect x="140" y="38" width="1.2" height="1" fill="#5a7cff" opacity="0.42"/><rect x="140" y="60" width="1.2" height="1" fill="#5a7cff" opacity="0.45"/><rect x="140" y="66" width="1.2" height="1" fill="#5a7cff" opacity="0.58"/><rect x="140" y="68" width="1.2" height="1" fill="#5a7cff" opacity="0.63"/>
<rect x="71" y="5.3" width="10.7" height="4" fill="#a8b8f0"/><rect x="127" y="5.3" width="10.8" height="4" fill="#a8b8f0"/><rect x="86" y="5.3" width="10" height="4" fill="#8898e0" opacity=".8"/><rect x="113" y="5.3" width="10" height="4" fill="#8898e0" opacity=".8"/>
<rect x="91" y="5.3" width="26.7" height="4" fill="#fafcff"/>
<rect x="71" y="16.7" width="10" height="2.7" fill="#9aacea"/><rect x="127.7" y="16.7" width="10" height="2.7" fill="#9aacea"/>
<rect x="93.7" y="16.7" width="22" height="2.7" fill="#f0f4ff"/>
<rect x="75" y="24.7" width="8" height="2" fill="#8a9ce0" opacity=".8"/><rect x="126" y="24.7" width="8" height="2" fill="#8a9ce0" opacity=".8"/>
<rect x="95" y="24.7" width="19.4" height="2" fill="#e8eeff"/>
<rect x="97" y="30" width="15.4" height="2" fill="#dae2ff"/><rect x="98.4" y="34.5" width="12.6" height="1.7" fill="#c8d4ff"/>
<rect x="99.5" y="38.5" width="10.4" height="1.4" fill="#b8c6ff"/><rect x="100.5" y="42" width="8.4" height="1.2" fill="#a8b8ff"/>
<path d="M88 79L101 52H108L121 79Z" fill="url(#gfl)"/>
<rect x="102.8" y="44" width="3.4" height="30" fill="#eef4ff" opacity=".95"/>
</svg></div><div class="ttl">MTDS 5123 Big Data<br>Management</div><div class="badge">Hidden from students</div><div class="ftr"><svg class="shield" viewBox="0 0 19 21"><path d="M1.2 4.3Q9.5 -0.3 17.8 4.3V11Q17.8 16.8 9.5 20.2 1.2 16.8 1.2 11Z" fill="#dedede" stroke="#505050" stroke-width="1.2" stroke-linejoin="round"/><path d="M2.8 5.3Q9.5 1.8 16.2 5.3" fill="none" stroke="#aaa" stroke-width=".4" stroke-dasharray=".6 .6"/><path d="M7 9.5H12M5.5 11.2H13.5" stroke="#9a9a9a" stroke-width=".5"/></svg><span>Learning Path</span></div></div>
<div class="card" style="left:751.9px;top:315.4px"><div class="img"><svg width="210" height="79" viewBox="0 0 210 79"><rect width="210" height="79" fill="#8e8d93"/></svg></div><div class="ttl">MTDS 5163 Modelling and<br>Decision Making</div><div class="badge">Hidden from students</div><div class="ftr"><svg class="shield" viewBox="0 0 19 21"><path d="M1.2 4.3Q9.5 -0.3 17.8 4.3V11Q17.8 16.8 9.5 20.2 1.2 16.8 1.2 11Z" fill="#dedede" stroke="#505050" stroke-width="1.2" stroke-linejoin="round"/><path d="M2.8 5.3Q9.5 1.8 16.2 5.3" fill="none" stroke="#aaa" stroke-width=".4" stroke-dasharray=".6 .6"/><path d="M7 9.5H12M5.5 11.2H13.5" stroke="#9a9a9a" stroke-width=".5"/></svg><span>Learning Path</span></div></div>
<div class="card" style="left:298.3px;top:511.3px"><div class="img"><svg width="210" height="79" viewBox="0 0 210 79"><rect width="210" height="79" fill="#5a2574"/>
<defs><linearGradient id="gp" x1="0.3" y1="0" x2="0" y2="1"><stop offset="0" stop-color="#ffdc3a"/><stop offset=".5" stop-color="#f2508e"/><stop offset="1" stop-color="#38b8f2"/></linearGradient>
<linearGradient id="gb" x1="0" x2="1" y1="0" y2="1"><stop offset="0" stop-color="#6a2a86"/><stop offset="1" stop-color="#4c1e6c"/></linearGradient></defs>
<rect width="210" height="79" fill="url(#gb)"/><circle cx="68.0" cy="11.9" r="0.63" fill="#c090e0" opacity="0.23"/><circle cx="112.5" cy="28.9" r="0.33" fill="#c090e0" opacity="0.40"/><circle cx="7.9" cy="34.3" r="0.33" fill="#c090e0" opacity="0.24"/><circle cx="89.1" cy="65.3" r="0.36" fill="#c090e0" opacity="0.29"/><circle cx="131.8" cy="74.9" r="0.59" fill="#c090e0" opacity="0.36"/><circle cx="205.0" cy="3.7" r="0.73" fill="#c090e0" opacity="0.32"/><circle cx="30.3" cy="9.3" r="0.45" fill="#c090e0" opacity="0.53"/><circle cx="38.0" cy="45.9" r="0.62" fill="#c090e0" opacity="0.35"/><circle cx="115.0" cy="5.0" r="0.33" fill="#c090e0" opacity="0.28"/><circle cx="142.9" cy="33.8" r="0.46" fill="#c090e0" opacity="0.43"/><circle cx="95.2" cy="23.7" r="0.70" fill="#c090e0" opacity="0.48"/><circle cx="51.3" cy="45.4" r="0.56" fill="#c090e0" opacity="0.55"/><circle cx="153.2" cy="22.7" r="0.79" fill="#c090e0" opacity="0.25"/><circle cx="87.8" cy="59.8" r="0.38" fill="#c090e0" opacity="0.40"/><circle cx="8.2" cy="52.8" r="0.68" fill="#c090e0" opacity="0.43"/><circle cx="183.9" cy="24.8" r="0.65" fill="#c090e0" opacity="0.44"/><circle cx="121.8" cy="36.0" r="0.72" fill="#c090e0" opacity="0.58"/><circle cx="99.6" cy="52.5" r="0.33" fill="#c090e0" opacity="0.48"/><circle cx="135.9" cy="78.5" r="0.71" fill="#c090e0" opacity="0.31"/><circle cx="81.0" cy="52.8" r="0.31" fill="#c090e0" opacity="0.38"/><circle cx="35.3" cy="9.3" r="0.33" fill="#c090e0" opacity="0.51"/><circle cx="27.2" cy="19.6" r="0.50" fill="#c090e0" opacity="0.55"/><circle cx="16.9" cy="35.5" r="0.57" fill="#c090e0" opacity="0.55"/><circle cx="172.0" cy="68.3" r="0.44" fill="#c090e0" opacity="0.37"/><circle cx="75.3" cy="69.9" r="0.78" fill="#c090e0" opacity="0.26"/><circle cx="37.0" cy="18.3" r="0.42" fill="#c090e0" opacity="0.39"/><circle cx="123.7" cy="20.8" r="0.30" fill="#c090e0" opacity="0.37"/><circle cx="77.5" cy="44.7" r="0.78" fill="#c090e0" opacity="0.48"/><circle cx="108.3" cy="48.8" r="0.64" fill="#c090e0" opacity="0.22"/><circle cx="188.9" cy="61.6" r="0.74" fill="#c090e0" opacity="0.52"/><circle cx="82.4" cy="31.5" r="0.35" fill="#c090e0" opacity="0.45"/><circle cx="13.1" cy="5.3" r="0.40" fill="#c090e0" opacity="0.26"/><circle cx="71.4" cy="4.2" r="0.30" fill="#c090e0" opacity="0.26"/><circle cx="21.3" cy="28.7" r="0.31" fill="#c090e0" opacity="0.55"/><circle cx="129.0" cy="11.7" r="0.43" fill="#c090e0" opacity="0.34"/><circle cx="76.5" cy="9.7" r="0.72" fill="#c090e0" opacity="0.60"/><circle cx="97.9" cy="38.2" r="0.34" fill="#c090e0" opacity="0.24"/><circle cx="72.0" cy="20.9" r="0.71" fill="#c090e0" opacity="0.26"/><circle cx="4.9" cy="75.1" r="0.56" fill="#c090e0" opacity="0.26"/><circle cx="114.1" cy="2.1" r="0.56" fill="#c090e0" opacity="0.59"/><circle cx="181.3" cy="55.0" r="0.43" fill="#c090e0" opacity="0.35"/><circle cx="35.1" cy="61.0" r="0.57" fill="#c090e0" opacity="0.51"/><circle cx="69.2" cy="17.6" r="0.71" fill="#c090e0" opacity="0.59"/><circle cx="179.1" cy="63.7" r="0.71" fill="#c090e0" opacity="0.50"/><circle cx="47.6" cy="40.9" r="0.48" fill="#c090e0" opacity="0.21"/><circle cx="5.9" cy="22.1" r="0.43" fill="#c090e0" opacity="0.48"/><circle cx="200.9" cy="35.3" r="0.77" fill="#c090e0" opacity="0.60"/><circle cx="200.6" cy="28.8" r="0.41" fill="#c090e0" opacity="0.29"/><circle cx="41.3" cy="16.1" r="0.61" fill="#c090e0" opacity="0.56"/><circle cx="176.5" cy="37.9" r="0.63" fill="#c090e0" opacity="0.52"/><circle cx="17.8" cy="52.2" r="0.75" fill="#c090e0" opacity="0.51"/><circle cx="157.5" cy="37.8" r="0.39" fill="#c090e0" opacity="0.52"/><circle cx="69.8" cy="63.3" r="0.79" fill="#c090e0" opacity="0.36"/><circle cx="84.3" cy="74.8" r="0.66" fill="#c090e0" opacity="0.27"/><circle cx="26.7" cy="11.9" r="0.75" fill="#c090e0" opacity="0.52"/><circle cx="30.7" cy="65.3" r="0.79" fill="#c090e0" opacity="0.46"/><circle cx="73.6" cy="43.3" r="0.37" fill="#c090e0" opacity="0.21"/><circle cx="203.9" cy="51.3" r="0.56" fill="#c090e0" opacity="0.57"/><circle cx="91.1" cy="68.9" r="0.71" fill="#c090e0" opacity="0.28"/><circle cx="52.9" cy="23.1" r="0.42" fill="#c090e0" opacity="0.43"/>
<path d="M152.8 12.9H173.3Q174.5 13 174.3 14.5L165 65Q164.7 66.2 163.5 66.2H142.5Q141.2 66.2 141.5 65L151.5 14Q151.8 12.9 152.8 12.9Z" fill="url(#gp)" stroke="#f4f0f4" stroke-width="1"/>
<text x="155" y="23" font-size="4.5" fill="#fff" opacity=".6" font-family="Liberation Sans">12:45</text>
<circle cx="148" cy="8.5" r="1.8" fill="#e83a4a"/>
<path d="M176 6L182 9 180 13 176 11Z" fill="#e8e8f0"/><circle cx="183" cy="19" r="1.8" fill="none" stroke="#3ac0d8" stroke-width="1.1"/><circle cx="186.5" cy="16" r="1.3" fill="none" stroke="#3ac0d8" stroke-width="1"/>
<rect x="134" y="17" width="9" height="4.5" rx="1.5" fill="#e0a830"/>
<path d="M143 22L145 18 146 23Z" fill="#fff" opacity=".8"/>
<path d="M137 35L141 30 145 36 140 41Z" fill="#c050e8"/>
<path d="M126 51L130 47 133 52 130 56 126 56Z" fill="#e4e4e8"/>
<path d="M179 27L180.5 31H184L181 33 182 37 179 35 176 37 177 33 174 31H177.5Z" fill="#e8303a"/>
<rect x="181" y="37" width="6" height="7" rx="1" fill="#e83030"/>
<path d="M170 38C167 34 173 33 172.5 39L170 43 167 39Z" fill="#b060e0"/>
<path d="M179 47L184 48 183 54 178 53Z" fill="#f4f4f4"/><circle cx="181" cy="50" r="1.2" fill="#e83030"/>
<circle cx="170" cy="53" r="1.2" fill="#f0d040"/><ellipse cx="174" cy="61" rx="2.6" ry="3.4" fill="#f0d040"/>
<path d="M134 66L138 63 141 68 137 71Z" fill="#a868e0"/><path d="M167 69V74M170 68V73" stroke="#ddd" stroke-width=".7"/>
</svg></div><div class="ttl"></div><div class="badge">Hidden from students</div><div class="ftr"><svg class="shield" viewBox="0 0 19 21"><path d="M1.2 4.3Q9.5 -0.3 17.8 4.3V11Q17.8 16.8 9.5 20.2 1.2 16.8 1.2 11Z" fill="#dedede" stroke="#505050" stroke-width="1.2" stroke-linejoin="round"/><path d="M2.8 5.3Q9.5 1.8 16.2 5.3" fill="none" stroke="#aaa" stroke-width=".4" stroke-dasharray=".6 .6"/><path d="M7 9.5H12M5.5 11.2H13.5" stroke="#9a9a9a" stroke-width=".5"/></svg><span>Learning Path</span></div></div>
<div class="card" style="left:525.1px;top:511.3px"><div class="img"><svg width="210" height="79" viewBox="0 0 210 79"><rect width="210" height="79" fill="#8e8d93"/></svg></div><div class="ttl"></div><div class="badge">Hidden from students</div><div class="ftr"><svg class="shield" viewBox="0 0 19 21"><path d="M1.2 4.3Q9.5 -0.3 17.8 4.3V11Q17.8 16.8 9.5 20.2 1.2 16.8 1.2 11Z" fill="#dedede" stroke="#505050" stroke-width="1.2" stroke-linejoin="round"/><path d="M2.8 5.3Q9.5 1.8 16.2 5.3" fill="none" stroke="#aaa" stroke-width=".4" stroke-dasharray=".6 .6"/><path d="M7 9.5H12M5.5 11.2H13.5" stroke="#9a9a9a" stroke-width=".5"/></svg><span>Learning Path</span></div></div>
<div class="card" style="left:751.9px;top:511.3px"><div class="img"><svg width="210" height="79" viewBox="0 0 210 79"><rect width="210" height="79" fill="#d8c890"/>
<defs><filter id="blr" x="-10%" y="-10%" width="120%" height="120%"><feGaussianBlur stdDeviation="1.8"/></filter></defs>
<rect width="210" height="79" fill="#dccb8a"/><g filter="url(#blr)"><ellipse cx="95.0" cy="44.2" rx="11.3" ry="4.3" fill="#b89a48" opacity="0.79"/><ellipse cx="39.9" cy="63.5" rx="7.3" ry="5.1" fill="#f4f0dc" opacity="0.49"/><ellipse cx="63.7" cy="7.2" rx="10.3" ry="5.5" fill="#f4f0dc" opacity="0.69"/><ellipse cx="83.2" cy="35.8" rx="9.7" ry="5.3" fill="#b89a48" opacity="0.46"/><ellipse cx="111.0" cy="4.7" rx="4.7" ry="3.2" fill="#f4f0dc" opacity="0.76"/><ellipse cx="68.5" cy="46.7" rx="4.8" ry="3.2" fill="#efe8cc" opacity="0.65"/><ellipse cx="139.1" cy="36.1" rx="5.5" ry="7.0" fill="#f4f0dc" opacity="0.73"/><ellipse cx="66.2" cy="18.1" rx="5.6" ry="2.4" fill="#f4f0dc" opacity="0.61"/><ellipse cx="177.8" cy="30.5" rx="11.6" ry="6.2" fill="#f4f0dc" opacity="0.54"/><ellipse cx="194.7" cy="4.1" rx="6.4" ry="5.5" fill="#c8a850" opacity="0.48"/><ellipse cx="132.2" cy="61.5" rx="5.4" ry="2.4" fill="#efe8cc" opacity="0.46"/><ellipse cx="86.1" cy="72.9" rx="4.2" ry="5.5" fill="#f4f0dc" opacity="0.47"/><ellipse cx="167.4" cy="14.0" rx="8.0" ry="4.2" fill="#f4f0dc" opacity="0.84"/><ellipse cx="161.6" cy="33.1" rx="6.5" ry="4.0" fill="#f4f0dc" opacity="0.45"/><ellipse cx="181.5" cy="77.0" rx="8.3" ry="7.0" fill="#f4f0dc" opacity="0.53"/><ellipse cx="82.8" cy="67.5" rx="8.8" ry="2.5" fill="#f4f0dc" opacity="0.54"/><ellipse cx="54.2" cy="61.0" rx="6.0" ry="3.5" fill="#f4f0dc" opacity="0.48"/><ellipse cx="43.8" cy="50.3" rx="3.1" ry="3.8" fill="#b89a48" opacity="0.63"/><ellipse cx="201.4" cy="38.2" rx="8.2" ry="6.3" fill="#f4f0dc" opacity="0.70"/><ellipse cx="65.3" cy="18.0" rx="8.5" ry="5.6" fill="#f4f0dc" opacity="0.75"/><ellipse cx="197.5" cy="15.5" rx="11.6" ry="6.4" fill="#b89a48" opacity="0.48"/><ellipse cx="10.0" cy="8.6" rx="7.6" ry="3.3" fill="#c8a850" opacity="0.55"/><ellipse cx="173.0" cy="47.1" rx="5.6" ry="2.9" fill="#f4f0dc" opacity="0.50"/><ellipse cx="100.7" cy="51.6" rx="8.5" ry="2.4" fill="#f4f0dc" opacity="0.82"/><ellipse cx="42.8" cy="1.3" rx="5.4" ry="4.2" fill="#f4f0dc" opacity="0.47"/><ellipse cx="59.2" cy="41.9" rx="11.8" ry="2.5" fill="#f4f0dc" opacity="0.81"/><ellipse cx="205.9" cy="51.9" rx="9.2" ry="4.9" fill="#f4f0dc" opacity="0.69"/><ellipse cx="194.0" cy="37.5" rx="6.2" ry="3.6" fill="#f4f0dc" opacity="0.46"/><ellipse cx="133.6" cy="38.1" rx="9.6" ry="3.6" fill="#f4f0dc" opacity="0.48"/><ellipse cx="114.7" cy="58.2" rx="11.1" ry="5.7" fill="#f4f0dc" opacity="0.77"/><ellipse cx="192.2" cy="27.8" rx="9.2" ry="6.5" fill="#c8a850" opacity="0.83"/><ellipse cx="6.4" cy="39.5" rx="3.1" ry="5.3" fill="#c8a850" opacity="0.68"/><ellipse cx="127.9" cy="6.3" rx="8.8" ry="7.0" fill="#c8a850" opacity="0.74"/><ellipse cx="81.6" cy="58.1" rx="8.2" ry="4.2" fill="#b89a48" opacity="0.48"/><ellipse cx="157.5" cy="2.4" rx="8.4" ry="4.4" fill="#f4f0dc" opacity="0.83"/><ellipse cx="23.7" cy="61.6" rx="8.9" ry="4.4" fill="#f4f0dc" opacity="0.60"/><ellipse cx="30.1" cy="48.3" rx="7.7" ry="5.8" fill="#efe8cc" opacity="0.71"/><ellipse cx="92.8" cy="70.4" rx="5.9" ry="5.3" fill="#f4f0dc" opacity="0.70"/><ellipse cx="168.8" cy="59.6" rx="4.8" ry="3.1" fill="#f4f0dc" opacity="0.68"/><ellipse cx="66.5" cy="10.8" rx="7.5" ry="6.2" fill="#f4f0dc" opacity="0.73"/></g>
<rect x="0.5" y="7.6" width="33.5" height="30.4" fill="#8a6428"/><g stroke="#b08a40" stroke-width=".5"><path d="M1 10H33"/><path d="M1 13H33"/><path d="M1 16H33"/><path d="M1 19H33"/><path d="M1 22H33"/><path d="M1 25H33"/><path d="M1 28H33"/><path d="M1 31H33"/><path d="M1 34H33"/><path d="M1 37H33"/></g>
<path d="M80 0H111.6L107.5 43.6Z" fill="#2a5490"/><path d="M86 0H108L105 30Z" fill="#3a78b8" opacity=".8"/>
<path d="M118.6 0H193.5V10L121 44.5Z" fill="#1a2226"/><path d="M135 8L170 6 125 32Z" fill="#2a4a30" opacity=".6"/>
<path d="M150 0H160L155 3Z" fill="#d06030"/>
<ellipse cx="112.8" cy="56" rx="19.4" ry="12.5" fill="#2a1e10"/><ellipse cx="112.8" cy="56" rx="16.5" ry="10" fill="#c89a30"/><ellipse cx="113" cy="56.5" rx="7" ry="4.5" fill="#d06034"/>
<path d="M79 79L98 66H106L93 79Z" fill="#1a2226"/>
<circle cx="67" cy="20.5" r="1.9" fill="#1a1a1a"/>
<ellipse cx="60" cy="54.7" rx="5.5" ry="4.2" fill="#b88a2a"/><ellipse cx="60" cy="55" rx="3.5" ry="2.5" fill="#d0a040"/>
<ellipse cx="176.6" cy="35" rx="4.8" ry="3.6" fill="#c89838"/>
<path d="M196 44H210V56L204 58Z" fill="#1a2226"/><rect x="199" y="57" width="11" height="22" fill="#d07a32"/>
<rect x="168" y="74" width="42" height="5" fill="#c8622a"/>
</svg></div><div class="ttl"></div><div class="badge">Hidden from students</div><div class="ftr"><svg class="shield" viewBox="0 0 19 21"><path d="M1.2 4.3Q9.5 -0.3 17.8 4.3V11Q17.8 16.8 9.5 20.2 1.2 16.8 1.2 11Z" fill="#dedede" stroke="#505050" stroke-width="1.2" stroke-linejoin="round"/><path d="M2.8 5.3Q9.5 1.8 16.2 5.3" fill="none" stroke="#aaa" stroke-width=".4" stroke-dasharray=".6 .6"/><path d="M7 9.5H12M5.5 11.2H13.5" stroke="#9a9a9a" stroke-width=".5"/></svg><span>Learning Path</span></div></div>
<div class="a" style="left:968.2px;top:510.2px;width:35.7px;height:33.4px;border-radius:4px;background:#7fb3df"></div>
<svg class="a" style="left:980px;top:520.8px" width="12.6" height="12.6" viewBox="0 0 12 12"><circle cx="6" cy="6" r="6" fill="#000"/><path d="M3.3 7.3L6 4.6L8.7 7.3" fill="none" stroke="#7fb3df" stroke-width="1.6"/></svg>
<div class="a" style="left:0;top:572px;width:1024px;height:27px;background:linear-gradient(rgba(0,0,0,0),rgba(0,0,0,.075));-webkit-mask-image:linear-gradient(to right,#000 0,#000 88%,rgba(0,0,0,.2) 100%)"></div>
<div class="a" style="left:-40px;top:540px;width:110px;height:100px;background:radial-gradient(ellipse at 0% 100%,rgba(0,0,0,.05),rgba(0,0,0,0) 70%)"></div>
</body></html>
